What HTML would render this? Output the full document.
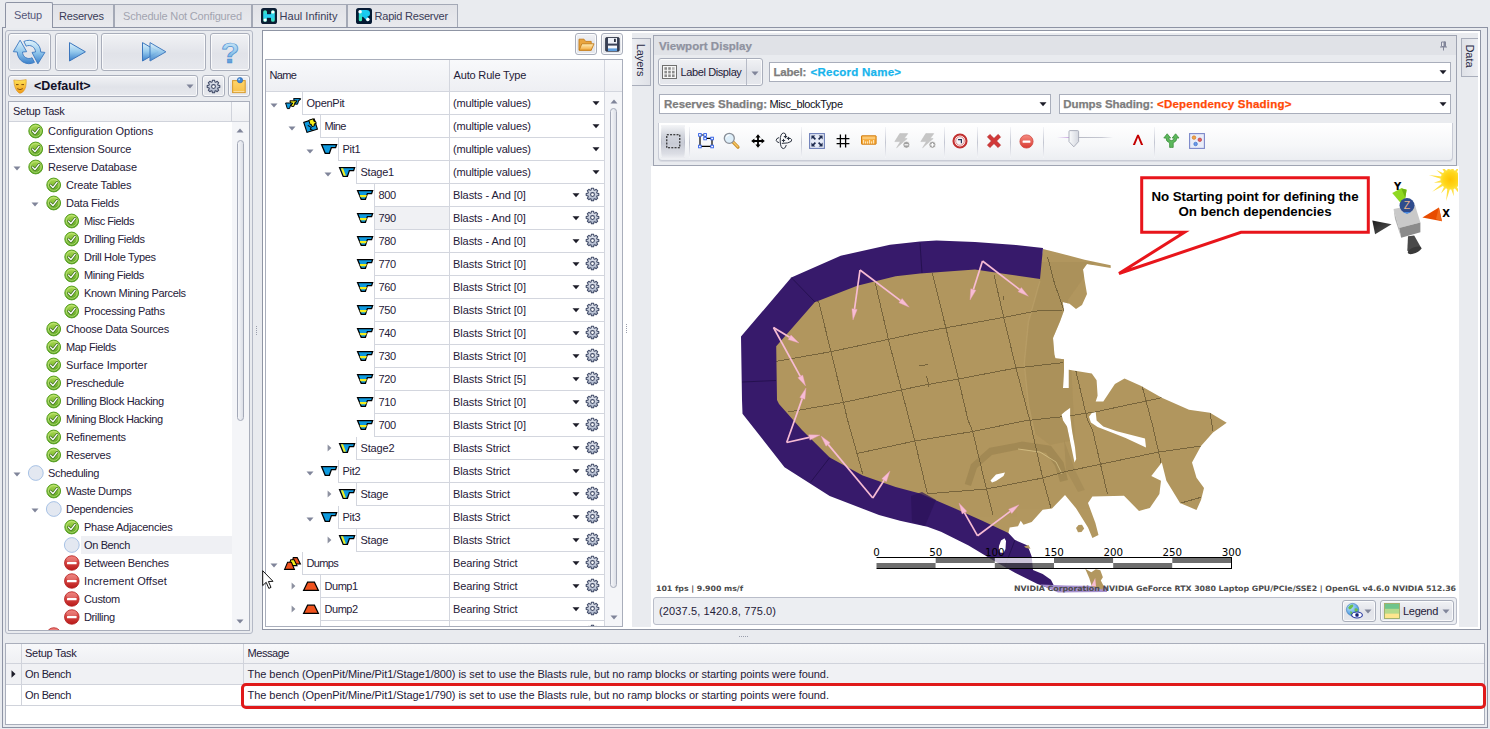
<!DOCTYPE html>
<html lang="en"><head><meta charset="utf-8"><title>Setup</title><style>
*{box-sizing:border-box}
html,body{margin:0;padding:0}
body{width:1490px;height:729px;overflow:hidden;background:#e9ebef;font-family:"Liberation Sans",sans-serif;font-size:11px;color:#1f2038;position:relative;letter-spacing:-0.05px}
.a{position:absolute}
.t{position:absolute;white-space:nowrap;line-height:14px;height:14px}
.btn{position:absolute;border:1px solid #a9aebb;border-radius:3px;background:linear-gradient(#f1f2f5,#e1e3e9 55%,#e6e8ed);box-shadow:inset 0 0 0 1px rgba(255,255,255,.75)}
.tab{position:absolute;border:1px solid #a4a9b6;border-bottom:none;background:linear-gradient(#e1e2e7,#e9eaee);top:4px;height:23px}
.inp{position:absolute;background:#fff;border:1px solid #a9aebb}
.hl{position:absolute;height:1px;background:#d5d8df}
.vl{position:absolute;width:1px;background:#d5d8df}
svg{position:absolute;overflow:visible}
</style></head>
<body>
<div class="a" style="left:2px;top:27px;width:1486px;height:701px;border:1px solid #8d93a4;background:#e9ebef"></div><div class="tab" style="left:52px;top:4px;width:62px;height:23px;"></div><div class="t" style="left:59px;top:9px;letter-spacing:-0.213px;color:#3a3c58">Reserves</div><div class="tab" style="left:114px;top:4px;width:138px;height:23px;"></div><div class="t" style="left:123px;top:9px;letter-spacing:-0.174px;color:#a2a4b0">Schedule Not Configured</div><div class="tab" style="left:252px;top:4px;width:95px;height:23px;"></div><div class="t" style="left:279.5px;top:9px;letter-spacing:0.038px;color:#3a3c58">Haul Infinity</div><div class="tab" style="left:347px;top:4px;width:111px;height:23px;"></div><div class="t" style="left:374.5px;top:9px;letter-spacing:-0.214px;color:#3a3c58">Rapid Reserver</div><div class="a" style="left:5px;top:2px;width:48px;height:26px;border:1px solid #8d93a4;border-bottom:none;background:#ebecf0;border-radius:2px 2px 0 0"></div><div class="t" style="left:14px;top:8px;letter-spacing:-0.150px;color:#55577a">Setup</div><svg style="left:261px;top:8px" width="16" height="16" viewBox="0 0 16 16"><defs><linearGradient id="ghi" x1="0" y1="0" x2="0" y2="1"><stop offset="0" stop-color="#3fe6b8"/><stop offset="0.5" stop-color="#2ad0f2"/><stop offset="1" stop-color="#3fe6b8"/></linearGradient></defs>
<rect x="0" y="0" width="16" height="16" rx="2.6" fill="#0b1d33"/>
<rect x="2.2" y="2.2" width="3.8" height="11.6" rx="1.9" fill="url(#ghi)"/><rect x="10" y="2.2" width="3.8" height="11.6" rx="1.9" fill="url(#ghi)"/><rect x="4.5" y="6.2" width="7" height="3.6" fill="#2ad0f2"/>
<circle cx="11.9" cy="4" r="1.6" fill="#fff"/><circle cx="4.1" cy="12" r="1.6" fill="#fff"/></svg><svg style="left:356px;top:8px" width="16" height="16" viewBox="0 0 16 16"><defs><linearGradient id="grr" x1="0" y1="0" x2="0" y2="1"><stop offset="0" stop-color="#1cc8f4"/><stop offset="1" stop-color="#3ff0b0"/></linearGradient></defs>
<rect x="0" y="0" width="16" height="16" rx="2.6" fill="#061a33"/>
<path d="M5 2.1 L10.4 2.1 Q14 2.1 14 5.4 Q14 8.7 10.4 8.7 L5 8.7 Z" fill="#1ccdf0"/>
<path d="M7.2 6.6 L11.8 11.4" stroke="#16c6f0" stroke-width="3.3" stroke-linecap="round"/>
<rect x="2.8" y="2.1" width="3.3" height="11.2" rx="1.65" fill="url(#grr)"/>
<circle cx="4.1" cy="3.8" r="1.75" fill="#fff"/><circle cx="11.8" cy="11.4" r="1.75" fill="#fff"/></svg><div class="a" style="left:5px;top:30px;width:248px;height:604px;border:1px solid #b4b9c6;border-radius:3px;background:#e9ebef"></div><div class="btn" style="left:8px;top:33px;width:43px;height:38px;"></div><div class="btn" style="left:55px;top:33px;width:43px;height:38px;"></div><div class="btn" style="left:101px;top:33px;width:105px;height:38px;"></div><div class="btn" style="left:210px;top:33px;width:40px;height:38px;"></div><svg style="left:13px;top:36px" width="34" height="32" viewBox="0 0 34 32"><defs><linearGradient id="gbl" x1="0" y1="0" x2="0" y2="1"><stop offset="0" stop-color="#e2f4fc"/><stop offset="0.5" stop-color="#93c8ec"/><stop offset="1" stop-color="#3a80cb"/></linearGradient></defs>
<g fill="url(#gbl)" stroke="#3b78bf" stroke-width="0.9" stroke-linejoin="round">
<path d="M10.87 5.48 A11.7 11.7 0 0 1 27.70 16 L31.9 16.4 L24.9 27.8 L19 16.4 L22.50 16 A6.5 6.5 0 0 0 13.15 10.16 Z"/>
<path d="M7.1 4.2 L13.7 15.7 L9.50 16 A6.5 6.5 0 0 0 19.05 21.74 L21.49 26.33 A11.7 11.7 0 0 1 4.30 16 L0.3 15.7 Z"/></g></svg><svg style="left:68px;top:40px" width="20" height="24" viewBox="0 0 20 24"><path d="M1.5 2.6 L17.4 11.8 L1.5 21 Z" fill="url(#gbl)" stroke="#3b76bd" stroke-width="1" stroke-linejoin="round"/></svg><svg style="left:141px;top:40px" width="28" height="24" viewBox="0 0 28 24"><path d="M1.5 2.6 L17.4 11.8 L1.5 21 Z" fill="url(#gbl)" stroke="#3b76bd" stroke-width="1" stroke-linejoin="round"/><path d="M9 2.6 L24.9 11.8 L9 21 Z" fill="url(#gbl)" stroke="#3b76bd" stroke-width="1" stroke-linejoin="round" opacity=".93"/></svg><svg style="left:218px;top:36px" width="26" height="32" viewBox="0 0 26 32"><text x="12.2" y="27" text-anchor="middle" font-family="Liberation Sans, sans-serif" font-weight="bold" font-size="30" fill="url(#gbl)" stroke="#4f8fd2" stroke-width="0.7">?</text></svg><div class="btn" style="left:8px;top:75px;width:190px;height:22px;"></div><svg style="left:13px;top:79px" width="14" height="15" viewBox="0 0 14 15"><defs><linearGradient id="gmk" x1="0" y1="0" x2="0" y2="1"><stop offset="0" stop-color="#ffe455"/><stop offset="1" stop-color="#f09a1a"/></linearGradient></defs>
<path d="M0.8 1 Q7 2.2 13.2 0.6 Q13.6 9 10.4 12.4 Q7.6 15 6 14 Q1.2 10.6 0.8 1 Z" fill="url(#gmk)" stroke="#d8901a" stroke-width="0.6"/>
<path d="M3 5.6 L5.6 5.6 M8.4 5.6 L11 5.6" stroke="#7a4a10" stroke-width="1"/><path d="M4.2 9.6 Q7 11.8 9.8 9.6" fill="none" stroke="#7a4a10" stroke-width="0.9"/></svg><div class="t" style="left:34px;top:79px;font-weight:bold;font-size:12.5px;color:#101028">&lt;Default&gt;</div><svg style="left:186px;top:84px" width="8" height="5" viewBox="0 0 8 5"><path d="M0.5 0.5 L7.5 0.5 L4 4.5 Z" fill="#80859a"/></svg><div class="btn" style="left:202px;top:75px;width:23px;height:22px;"></div><svg style="left:205.5px;top:78.5px" width="15" height="15" viewBox="0 0 15 15"><defs><linearGradient id="ggr" x1="0" y1="0" x2="0" y2="1"><stop offset="0" stop-color="#e6e9f1"/><stop offset="1" stop-color="#a9b3c8"/></linearGradient></defs>
<path d="M13.81 6.42 L13.81 8.58 L11.99 8.89 L11.66 9.69 L12.73 11.19 L11.19 12.73 L9.69 11.66 L8.89 11.99 L8.58 13.81 L6.42 13.81 L6.11 11.99 L5.31 11.66 L3.81 12.73 L2.27 11.19 L3.34 9.69 L3.01 8.89 L1.19 8.58 L1.19 6.42 L3.01 6.11 L3.34 5.31 L2.27 3.81 L3.81 2.27 L5.31 3.34 L6.11 3.01 L6.42 1.19 L8.58 1.19 L8.89 3.01 L9.69 3.34 L11.19 2.27 L12.73 3.81 L11.66 5.31 L11.99 6.11 Z" fill="url(#ggr)" stroke="#3f4966" stroke-width="1.05" stroke-linejoin="round"/><circle cx="7.5" cy="7.5" r="1.9" fill="#fff" stroke="#3f4966" stroke-width="1.05"/></svg><div class="btn" style="left:228px;top:75px;width:22px;height:22px;"></div><svg style="left:232px;top:77px" width="14" height="17" viewBox="0 0 14 17"><defs><linearGradient id="gnt" x1="0" y1="0" x2="0" y2="1"><stop offset="0" stop-color="#ffd56a"/><stop offset="1" stop-color="#f7c04a"/></linearGradient></defs>
<rect x="0.6" y="3.6" width="12.6" height="12" fill="url(#gnt)" stroke="#d79a2c" stroke-width="1"/><path d="M1.5 14.6 L12.4 14.6" stroke="#fbe3a8" stroke-width="1"/>
<circle cx="8" cy="3.2" r="2.7" fill="#3e86d6" stroke="#2a62a8" stroke-width="0.6"/><circle cx="7.2" cy="2.4" r="0.9" fill="#bfe0ff"/></svg><div class="a" style="left:8px;top:101px;width:242px;height:530px;border:1px solid #a9aebb;background:#fff;overflow:hidden"></div><div class="a" style="left:9px;top:102px;width:240px;height:19px;background:linear-gradient(#f7f8fa,#eff0f3)"></div><div class="a" style="left:9px;top:121px;width:240px;height:1px;background:#d0d3db"></div><div class="a" style="left:231px;top:102px;width:1px;height:19px;background:#d0d3db"></div><div class="t" style="left:13px;top:104px;letter-spacing:-0.267px;">Setup Task</div><div class="a" style="left:81px;top:536px;width:151px;height:18px;background:#eff0f4"></div><div class="a" style="left:0;top:0;width:250px;height:630px;overflow:hidden"><svg style="left:28px;top:123px" width="16" height="16" viewBox="0 0 16 16"><defs><linearGradient id="gck" x1="0" y1="0" x2="0" y2="1"><stop offset="0" stop-color="#b0dc52"/><stop offset="1" stop-color="#55a020"/></linearGradient></defs>
<circle cx="7.7" cy="8" r="6.9" fill="url(#gck)" stroke="#58a024" stroke-width="1"/>
<circle cx="7.7" cy="8" r="5.4" fill="none" stroke="#c9ea8e" stroke-width="0.9" opacity=".75"/>
<path d="M4.5 8.1 L6.9 10.6 L11.1 5.4" fill="none" stroke="#3f6f1e" stroke-width="2.7" stroke-linecap="round" stroke-linejoin="round"/>
<path d="M4.5 8.1 L6.9 10.6 L11.1 5.4" fill="none" stroke="#fff" stroke-width="1.35" stroke-linecap="round" stroke-linejoin="round"/></svg><div class="t" style="left:48px;top:124px;letter-spacing:-0.062px;">Configuration Options</div><svg style="left:28px;top:141px" width="16" height="16" viewBox="0 0 16 16"><defs><linearGradient id="gck" x1="0" y1="0" x2="0" y2="1"><stop offset="0" stop-color="#b0dc52"/><stop offset="1" stop-color="#55a020"/></linearGradient></defs>
<circle cx="7.7" cy="8" r="6.9" fill="url(#gck)" stroke="#58a024" stroke-width="1"/>
<circle cx="7.7" cy="8" r="5.4" fill="none" stroke="#c9ea8e" stroke-width="0.9" opacity=".75"/>
<path d="M4.5 8.1 L6.9 10.6 L11.1 5.4" fill="none" stroke="#3f6f1e" stroke-width="2.7" stroke-linecap="round" stroke-linejoin="round"/>
<path d="M4.5 8.1 L6.9 10.6 L11.1 5.4" fill="none" stroke="#fff" stroke-width="1.35" stroke-linecap="round" stroke-linejoin="round"/></svg><div class="t" style="left:48px;top:142px;letter-spacing:-0.184px;">Extension Source</div><svg style="left:13px;top:166px" width="8" height="5" viewBox="0 0 8 5"><path d="M0.5 0.5 L7.5 0.5 L4 4.5 Z" fill="#80859a"/></svg><svg style="left:28px;top:159px" width="16" height="16" viewBox="0 0 16 16"><defs><linearGradient id="gck" x1="0" y1="0" x2="0" y2="1"><stop offset="0" stop-color="#b0dc52"/><stop offset="1" stop-color="#55a020"/></linearGradient></defs>
<circle cx="7.7" cy="8" r="6.9" fill="url(#gck)" stroke="#58a024" stroke-width="1"/>
<circle cx="7.7" cy="8" r="5.4" fill="none" stroke="#c9ea8e" stroke-width="0.9" opacity=".75"/>
<path d="M4.5 8.1 L6.9 10.6 L11.1 5.4" fill="none" stroke="#3f6f1e" stroke-width="2.7" stroke-linecap="round" stroke-linejoin="round"/>
<path d="M4.5 8.1 L6.9 10.6 L11.1 5.4" fill="none" stroke="#fff" stroke-width="1.35" stroke-linecap="round" stroke-linejoin="round"/></svg><div class="t" style="left:48px;top:160px;letter-spacing:-0.137px;">Reserve Database</div><svg style="left:46px;top:177px" width="16" height="16" viewBox="0 0 16 16"><defs><linearGradient id="gck" x1="0" y1="0" x2="0" y2="1"><stop offset="0" stop-color="#b0dc52"/><stop offset="1" stop-color="#55a020"/></linearGradient></defs>
<circle cx="7.7" cy="8" r="6.9" fill="url(#gck)" stroke="#58a024" stroke-width="1"/>
<circle cx="7.7" cy="8" r="5.4" fill="none" stroke="#c9ea8e" stroke-width="0.9" opacity=".75"/>
<path d="M4.5 8.1 L6.9 10.6 L11.1 5.4" fill="none" stroke="#3f6f1e" stroke-width="2.7" stroke-linecap="round" stroke-linejoin="round"/>
<path d="M4.5 8.1 L6.9 10.6 L11.1 5.4" fill="none" stroke="#fff" stroke-width="1.35" stroke-linecap="round" stroke-linejoin="round"/></svg><div class="t" style="left:66px;top:178px;letter-spacing:-0.182px;">Create Tables</div><svg style="left:31px;top:202px" width="8" height="5" viewBox="0 0 8 5"><path d="M0.5 0.5 L7.5 0.5 L4 4.5 Z" fill="#80859a"/></svg><svg style="left:46px;top:195px" width="16" height="16" viewBox="0 0 16 16"><defs><linearGradient id="gck" x1="0" y1="0" x2="0" y2="1"><stop offset="0" stop-color="#b0dc52"/><stop offset="1" stop-color="#55a020"/></linearGradient></defs>
<circle cx="7.7" cy="8" r="6.9" fill="url(#gck)" stroke="#58a024" stroke-width="1"/>
<circle cx="7.7" cy="8" r="5.4" fill="none" stroke="#c9ea8e" stroke-width="0.9" opacity=".75"/>
<path d="M4.5 8.1 L6.9 10.6 L11.1 5.4" fill="none" stroke="#3f6f1e" stroke-width="2.7" stroke-linecap="round" stroke-linejoin="round"/>
<path d="M4.5 8.1 L6.9 10.6 L11.1 5.4" fill="none" stroke="#fff" stroke-width="1.35" stroke-linecap="round" stroke-linejoin="round"/></svg><div class="t" style="left:66px;top:196px;letter-spacing:-0.244px;">Data Fields</div><svg style="left:64px;top:213px" width="16" height="16" viewBox="0 0 16 16"><defs><linearGradient id="gck" x1="0" y1="0" x2="0" y2="1"><stop offset="0" stop-color="#b0dc52"/><stop offset="1" stop-color="#55a020"/></linearGradient></defs>
<circle cx="7.7" cy="8" r="6.9" fill="url(#gck)" stroke="#58a024" stroke-width="1"/>
<circle cx="7.7" cy="8" r="5.4" fill="none" stroke="#c9ea8e" stroke-width="0.9" opacity=".75"/>
<path d="M4.5 8.1 L6.9 10.6 L11.1 5.4" fill="none" stroke="#3f6f1e" stroke-width="2.7" stroke-linecap="round" stroke-linejoin="round"/>
<path d="M4.5 8.1 L6.9 10.6 L11.1 5.4" fill="none" stroke="#fff" stroke-width="1.35" stroke-linecap="round" stroke-linejoin="round"/></svg><div class="t" style="left:84px;top:214px;letter-spacing:-0.460px;">Misc Fields</div><svg style="left:64px;top:231px" width="16" height="16" viewBox="0 0 16 16"><defs><linearGradient id="gck" x1="0" y1="0" x2="0" y2="1"><stop offset="0" stop-color="#b0dc52"/><stop offset="1" stop-color="#55a020"/></linearGradient></defs>
<circle cx="7.7" cy="8" r="6.9" fill="url(#gck)" stroke="#58a024" stroke-width="1"/>
<circle cx="7.7" cy="8" r="5.4" fill="none" stroke="#c9ea8e" stroke-width="0.9" opacity=".75"/>
<path d="M4.5 8.1 L6.9 10.6 L11.1 5.4" fill="none" stroke="#3f6f1e" stroke-width="2.7" stroke-linecap="round" stroke-linejoin="round"/>
<path d="M4.5 8.1 L6.9 10.6 L11.1 5.4" fill="none" stroke="#fff" stroke-width="1.35" stroke-linecap="round" stroke-linejoin="round"/></svg><div class="t" style="left:84px;top:232px;letter-spacing:-0.357px;">Drilling Fields</div><svg style="left:64px;top:249px" width="16" height="16" viewBox="0 0 16 16"><defs><linearGradient id="gck" x1="0" y1="0" x2="0" y2="1"><stop offset="0" stop-color="#b0dc52"/><stop offset="1" stop-color="#55a020"/></linearGradient></defs>
<circle cx="7.7" cy="8" r="6.9" fill="url(#gck)" stroke="#58a024" stroke-width="1"/>
<circle cx="7.7" cy="8" r="5.4" fill="none" stroke="#c9ea8e" stroke-width="0.9" opacity=".75"/>
<path d="M4.5 8.1 L6.9 10.6 L11.1 5.4" fill="none" stroke="#3f6f1e" stroke-width="2.7" stroke-linecap="round" stroke-linejoin="round"/>
<path d="M4.5 8.1 L6.9 10.6 L11.1 5.4" fill="none" stroke="#fff" stroke-width="1.35" stroke-linecap="round" stroke-linejoin="round"/></svg><div class="t" style="left:84px;top:250px;letter-spacing:-0.317px;">Drill Hole Types</div><svg style="left:64px;top:267px" width="16" height="16" viewBox="0 0 16 16"><defs><linearGradient id="gck" x1="0" y1="0" x2="0" y2="1"><stop offset="0" stop-color="#b0dc52"/><stop offset="1" stop-color="#55a020"/></linearGradient></defs>
<circle cx="7.7" cy="8" r="6.9" fill="url(#gck)" stroke="#58a024" stroke-width="1"/>
<circle cx="7.7" cy="8" r="5.4" fill="none" stroke="#c9ea8e" stroke-width="0.9" opacity=".75"/>
<path d="M4.5 8.1 L6.9 10.6 L11.1 5.4" fill="none" stroke="#3f6f1e" stroke-width="2.7" stroke-linecap="round" stroke-linejoin="round"/>
<path d="M4.5 8.1 L6.9 10.6 L11.1 5.4" fill="none" stroke="#fff" stroke-width="1.35" stroke-linecap="round" stroke-linejoin="round"/></svg><div class="t" style="left:84px;top:268px;letter-spacing:-0.375px;">Mining Fields</div><svg style="left:64px;top:285px" width="16" height="16" viewBox="0 0 16 16"><defs><linearGradient id="gck" x1="0" y1="0" x2="0" y2="1"><stop offset="0" stop-color="#b0dc52"/><stop offset="1" stop-color="#55a020"/></linearGradient></defs>
<circle cx="7.7" cy="8" r="6.9" fill="url(#gck)" stroke="#58a024" stroke-width="1"/>
<circle cx="7.7" cy="8" r="5.4" fill="none" stroke="#c9ea8e" stroke-width="0.9" opacity=".75"/>
<path d="M4.5 8.1 L6.9 10.6 L11.1 5.4" fill="none" stroke="#3f6f1e" stroke-width="2.7" stroke-linecap="round" stroke-linejoin="round"/>
<path d="M4.5 8.1 L6.9 10.6 L11.1 5.4" fill="none" stroke="#fff" stroke-width="1.35" stroke-linecap="round" stroke-linejoin="round"/></svg><div class="t" style="left:84px;top:286px;letter-spacing:-0.354px;">Known Mining Parcels</div><svg style="left:64px;top:303px" width="16" height="16" viewBox="0 0 16 16"><defs><linearGradient id="gck" x1="0" y1="0" x2="0" y2="1"><stop offset="0" stop-color="#b0dc52"/><stop offset="1" stop-color="#55a020"/></linearGradient></defs>
<circle cx="7.7" cy="8" r="6.9" fill="url(#gck)" stroke="#58a024" stroke-width="1"/>
<circle cx="7.7" cy="8" r="5.4" fill="none" stroke="#c9ea8e" stroke-width="0.9" opacity=".75"/>
<path d="M4.5 8.1 L6.9 10.6 L11.1 5.4" fill="none" stroke="#3f6f1e" stroke-width="2.7" stroke-linecap="round" stroke-linejoin="round"/>
<path d="M4.5 8.1 L6.9 10.6 L11.1 5.4" fill="none" stroke="#fff" stroke-width="1.35" stroke-linecap="round" stroke-linejoin="round"/></svg><div class="t" style="left:84px;top:304px;letter-spacing:-0.314px;">Processing Paths</div><svg style="left:46px;top:321px" width="16" height="16" viewBox="0 0 16 16"><defs><linearGradient id="gck" x1="0" y1="0" x2="0" y2="1"><stop offset="0" stop-color="#b0dc52"/><stop offset="1" stop-color="#55a020"/></linearGradient></defs>
<circle cx="7.7" cy="8" r="6.9" fill="url(#gck)" stroke="#58a024" stroke-width="1"/>
<circle cx="7.7" cy="8" r="5.4" fill="none" stroke="#c9ea8e" stroke-width="0.9" opacity=".75"/>
<path d="M4.5 8.1 L6.9 10.6 L11.1 5.4" fill="none" stroke="#3f6f1e" stroke-width="2.7" stroke-linecap="round" stroke-linejoin="round"/>
<path d="M4.5 8.1 L6.9 10.6 L11.1 5.4" fill="none" stroke="#fff" stroke-width="1.35" stroke-linecap="round" stroke-linejoin="round"/></svg><div class="t" style="left:66px;top:322px;letter-spacing:-0.247px;">Choose Data Sources</div><svg style="left:46px;top:339px" width="16" height="16" viewBox="0 0 16 16"><defs><linearGradient id="gck" x1="0" y1="0" x2="0" y2="1"><stop offset="0" stop-color="#b0dc52"/><stop offset="1" stop-color="#55a020"/></linearGradient></defs>
<circle cx="7.7" cy="8" r="6.9" fill="url(#gck)" stroke="#58a024" stroke-width="1"/>
<circle cx="7.7" cy="8" r="5.4" fill="none" stroke="#c9ea8e" stroke-width="0.9" opacity=".75"/>
<path d="M4.5 8.1 L6.9 10.6 L11.1 5.4" fill="none" stroke="#3f6f1e" stroke-width="2.7" stroke-linecap="round" stroke-linejoin="round"/>
<path d="M4.5 8.1 L6.9 10.6 L11.1 5.4" fill="none" stroke="#fff" stroke-width="1.35" stroke-linecap="round" stroke-linejoin="round"/></svg><div class="t" style="left:66px;top:340px;letter-spacing:-0.388px;">Map Fields</div><svg style="left:46px;top:357px" width="16" height="16" viewBox="0 0 16 16"><defs><linearGradient id="gck" x1="0" y1="0" x2="0" y2="1"><stop offset="0" stop-color="#b0dc52"/><stop offset="1" stop-color="#55a020"/></linearGradient></defs>
<circle cx="7.7" cy="8" r="6.9" fill="url(#gck)" stroke="#58a024" stroke-width="1"/>
<circle cx="7.7" cy="8" r="5.4" fill="none" stroke="#c9ea8e" stroke-width="0.9" opacity=".75"/>
<path d="M4.5 8.1 L6.9 10.6 L11.1 5.4" fill="none" stroke="#3f6f1e" stroke-width="2.7" stroke-linecap="round" stroke-linejoin="round"/>
<path d="M4.5 8.1 L6.9 10.6 L11.1 5.4" fill="none" stroke="#fff" stroke-width="1.35" stroke-linecap="round" stroke-linejoin="round"/></svg><div class="t" style="left:66px;top:358px;letter-spacing:-0.041px;">Surface Importer</div><svg style="left:46px;top:375px" width="16" height="16" viewBox="0 0 16 16"><defs><linearGradient id="gck" x1="0" y1="0" x2="0" y2="1"><stop offset="0" stop-color="#b0dc52"/><stop offset="1" stop-color="#55a020"/></linearGradient></defs>
<circle cx="7.7" cy="8" r="6.9" fill="url(#gck)" stroke="#58a024" stroke-width="1"/>
<circle cx="7.7" cy="8" r="5.4" fill="none" stroke="#c9ea8e" stroke-width="0.9" opacity=".75"/>
<path d="M4.5 8.1 L6.9 10.6 L11.1 5.4" fill="none" stroke="#3f6f1e" stroke-width="2.7" stroke-linecap="round" stroke-linejoin="round"/>
<path d="M4.5 8.1 L6.9 10.6 L11.1 5.4" fill="none" stroke="#fff" stroke-width="1.35" stroke-linecap="round" stroke-linejoin="round"/></svg><div class="t" style="left:66px;top:376px;letter-spacing:-0.308px;">Preschedule</div><svg style="left:46px;top:393px" width="16" height="16" viewBox="0 0 16 16"><defs><linearGradient id="gck" x1="0" y1="0" x2="0" y2="1"><stop offset="0" stop-color="#b0dc52"/><stop offset="1" stop-color="#55a020"/></linearGradient></defs>
<circle cx="7.7" cy="8" r="6.9" fill="url(#gck)" stroke="#58a024" stroke-width="1"/>
<circle cx="7.7" cy="8" r="5.4" fill="none" stroke="#c9ea8e" stroke-width="0.9" opacity=".75"/>
<path d="M4.5 8.1 L6.9 10.6 L11.1 5.4" fill="none" stroke="#3f6f1e" stroke-width="2.7" stroke-linecap="round" stroke-linejoin="round"/>
<path d="M4.5 8.1 L6.9 10.6 L11.1 5.4" fill="none" stroke="#fff" stroke-width="1.35" stroke-linecap="round" stroke-linejoin="round"/></svg><div class="t" style="left:66px;top:394px;letter-spacing:-0.390px;">Drilling Block Hacking</div><svg style="left:46px;top:411px" width="16" height="16" viewBox="0 0 16 16"><defs><linearGradient id="gck" x1="0" y1="0" x2="0" y2="1"><stop offset="0" stop-color="#b0dc52"/><stop offset="1" stop-color="#55a020"/></linearGradient></defs>
<circle cx="7.7" cy="8" r="6.9" fill="url(#gck)" stroke="#58a024" stroke-width="1"/>
<circle cx="7.7" cy="8" r="5.4" fill="none" stroke="#c9ea8e" stroke-width="0.9" opacity=".75"/>
<path d="M4.5 8.1 L6.9 10.6 L11.1 5.4" fill="none" stroke="#3f6f1e" stroke-width="2.7" stroke-linecap="round" stroke-linejoin="round"/>
<path d="M4.5 8.1 L6.9 10.6 L11.1 5.4" fill="none" stroke="#fff" stroke-width="1.35" stroke-linecap="round" stroke-linejoin="round"/></svg><div class="t" style="left:66px;top:412px;letter-spacing:-0.424px;">Mining Block Hacking</div><svg style="left:46px;top:429px" width="16" height="16" viewBox="0 0 16 16"><defs><linearGradient id="gck" x1="0" y1="0" x2="0" y2="1"><stop offset="0" stop-color="#b0dc52"/><stop offset="1" stop-color="#55a020"/></linearGradient></defs>
<circle cx="7.7" cy="8" r="6.9" fill="url(#gck)" stroke="#58a024" stroke-width="1"/>
<circle cx="7.7" cy="8" r="5.4" fill="none" stroke="#c9ea8e" stroke-width="0.9" opacity=".75"/>
<path d="M4.5 8.1 L6.9 10.6 L11.1 5.4" fill="none" stroke="#3f6f1e" stroke-width="2.7" stroke-linecap="round" stroke-linejoin="round"/>
<path d="M4.5 8.1 L6.9 10.6 L11.1 5.4" fill="none" stroke="#fff" stroke-width="1.35" stroke-linecap="round" stroke-linejoin="round"/></svg><div class="t" style="left:66px;top:430px;letter-spacing:-0.165px;">Refinements</div><svg style="left:46px;top:447px" width="16" height="16" viewBox="0 0 16 16"><defs><linearGradient id="gck" x1="0" y1="0" x2="0" y2="1"><stop offset="0" stop-color="#b0dc52"/><stop offset="1" stop-color="#55a020"/></linearGradient></defs>
<circle cx="7.7" cy="8" r="6.9" fill="url(#gck)" stroke="#58a024" stroke-width="1"/>
<circle cx="7.7" cy="8" r="5.4" fill="none" stroke="#c9ea8e" stroke-width="0.9" opacity=".75"/>
<path d="M4.5 8.1 L6.9 10.6 L11.1 5.4" fill="none" stroke="#3f6f1e" stroke-width="2.7" stroke-linecap="round" stroke-linejoin="round"/>
<path d="M4.5 8.1 L6.9 10.6 L11.1 5.4" fill="none" stroke="#fff" stroke-width="1.35" stroke-linecap="round" stroke-linejoin="round"/></svg><div class="t" style="left:66px;top:448px;letter-spacing:-0.213px;">Reserves</div><svg style="left:13px;top:472px" width="8" height="5" viewBox="0 0 8 5"><path d="M0.5 0.5 L7.5 0.5 L4 4.5 Z" fill="#80859a"/></svg><svg style="left:28px;top:465px" width="16" height="16" viewBox="0 0 16 16"><circle cx="7.8" cy="8" r="7.4" fill="#e3e8f1" stroke="#a9c3e6" stroke-width="1"/></svg><div class="t" style="left:48px;top:466px;letter-spacing:-0.344px;">Scheduling</div><svg style="left:46px;top:483px" width="16" height="16" viewBox="0 0 16 16"><defs><linearGradient id="gck" x1="0" y1="0" x2="0" y2="1"><stop offset="0" stop-color="#b0dc52"/><stop offset="1" stop-color="#55a020"/></linearGradient></defs>
<circle cx="7.7" cy="8" r="6.9" fill="url(#gck)" stroke="#58a024" stroke-width="1"/>
<circle cx="7.7" cy="8" r="5.4" fill="none" stroke="#c9ea8e" stroke-width="0.9" opacity=".75"/>
<path d="M4.5 8.1 L6.9 10.6 L11.1 5.4" fill="none" stroke="#3f6f1e" stroke-width="2.7" stroke-linecap="round" stroke-linejoin="round"/>
<path d="M4.5 8.1 L6.9 10.6 L11.1 5.4" fill="none" stroke="#fff" stroke-width="1.35" stroke-linecap="round" stroke-linejoin="round"/></svg><div class="t" style="left:66px;top:484px;letter-spacing:-0.283px;">Waste Dumps</div><svg style="left:31px;top:508px" width="8" height="5" viewBox="0 0 8 5"><path d="M0.5 0.5 L7.5 0.5 L4 4.5 Z" fill="#80859a"/></svg><svg style="left:46px;top:501px" width="16" height="16" viewBox="0 0 16 16"><circle cx="7.8" cy="8" r="7.4" fill="#e3e8f1" stroke="#a9c3e6" stroke-width="1"/></svg><div class="t" style="left:66px;top:502px;letter-spacing:-0.281px;">Dependencies</div><svg style="left:64px;top:519px" width="16" height="16" viewBox="0 0 16 16"><defs><linearGradient id="gck" x1="0" y1="0" x2="0" y2="1"><stop offset="0" stop-color="#b0dc52"/><stop offset="1" stop-color="#55a020"/></linearGradient></defs>
<circle cx="7.7" cy="8" r="6.9" fill="url(#gck)" stroke="#58a024" stroke-width="1"/>
<circle cx="7.7" cy="8" r="5.4" fill="none" stroke="#c9ea8e" stroke-width="0.9" opacity=".75"/>
<path d="M4.5 8.1 L6.9 10.6 L11.1 5.4" fill="none" stroke="#3f6f1e" stroke-width="2.7" stroke-linecap="round" stroke-linejoin="round"/>
<path d="M4.5 8.1 L6.9 10.6 L11.1 5.4" fill="none" stroke="#fff" stroke-width="1.35" stroke-linecap="round" stroke-linejoin="round"/></svg><div class="t" style="left:84px;top:520px;letter-spacing:-0.268px;">Phase Adjacencies</div><svg style="left:64px;top:537px" width="16" height="16" viewBox="0 0 16 16"><circle cx="7.8" cy="8" r="7.4" fill="#e3e8f1" stroke="#a9c3e6" stroke-width="1"/></svg><div class="t" style="left:84px;top:538px;letter-spacing:-0.367px;">On Bench</div><svg style="left:64px;top:555px" width="16" height="16" viewBox="0 0 16 16"><defs><linearGradient id="grd" x1="0" y1="0" x2="0" y2="1"><stop offset="0" stop-color="#ee6a64"/><stop offset="1" stop-color="#b81818"/></linearGradient></defs>
<circle cx="7.8" cy="8" r="7.3" fill="url(#grd)" stroke="#b42525" stroke-width="0.8"/>
<ellipse cx="7.8" cy="4.6" rx="5.4" ry="3.2" fill="#fff" opacity=".18"/>
<rect x="3" y="6.9" width="9.6" height="2.3" rx="0.5" fill="#fff"/></svg><div class="t" style="left:84px;top:556px;letter-spacing:-0.259px;">Between Benches</div><svg style="left:64px;top:573px" width="16" height="16" viewBox="0 0 16 16"><defs><linearGradient id="grd" x1="0" y1="0" x2="0" y2="1"><stop offset="0" stop-color="#ee6a64"/><stop offset="1" stop-color="#b81818"/></linearGradient></defs>
<circle cx="7.8" cy="8" r="7.3" fill="url(#grd)" stroke="#b42525" stroke-width="0.8"/>
<ellipse cx="7.8" cy="4.6" rx="5.4" ry="3.2" fill="#fff" opacity=".18"/>
<rect x="3" y="6.9" width="9.6" height="2.3" rx="0.5" fill="#fff"/></svg><div class="t" style="left:84px;top:574px;letter-spacing:0.117px;">Increment Offset</div><svg style="left:64px;top:591px" width="16" height="16" viewBox="0 0 16 16"><defs><linearGradient id="grd" x1="0" y1="0" x2="0" y2="1"><stop offset="0" stop-color="#ee6a64"/><stop offset="1" stop-color="#b81818"/></linearGradient></defs>
<circle cx="7.8" cy="8" r="7.3" fill="url(#grd)" stroke="#b42525" stroke-width="0.8"/>
<ellipse cx="7.8" cy="4.6" rx="5.4" ry="3.2" fill="#fff" opacity=".18"/>
<rect x="3" y="6.9" width="9.6" height="2.3" rx="0.5" fill="#fff"/></svg><div class="t" style="left:84px;top:592px;letter-spacing:-0.323px;">Custom</div><svg style="left:64px;top:609px" width="16" height="16" viewBox="0 0 16 16"><defs><linearGradient id="grd" x1="0" y1="0" x2="0" y2="1"><stop offset="0" stop-color="#ee6a64"/><stop offset="1" stop-color="#b81818"/></linearGradient></defs>
<circle cx="7.8" cy="8" r="7.3" fill="url(#grd)" stroke="#b42525" stroke-width="0.8"/>
<ellipse cx="7.8" cy="4.6" rx="5.4" ry="3.2" fill="#fff" opacity=".18"/>
<rect x="3" y="6.9" width="9.6" height="2.3" rx="0.5" fill="#fff"/></svg><div class="t" style="left:84px;top:610px;letter-spacing:-0.366px;">Drilling</div><svg style="left:46px;top:627px" width="16" height="16" viewBox="0 0 16 16"><defs><linearGradient id="grd" x1="0" y1="0" x2="0" y2="1"><stop offset="0" stop-color="#ee6a64"/><stop offset="1" stop-color="#b81818"/></linearGradient></defs>
<circle cx="7.8" cy="8" r="7.3" fill="url(#grd)" stroke="#b42525" stroke-width="0.8"/>
<ellipse cx="7.8" cy="4.6" rx="5.4" ry="3.2" fill="#fff" opacity=".18"/>
<rect x="3" y="6.9" width="9.6" height="2.3" rx="0.5" fill="#fff"/></svg></div><div class="a" style="left:232px;top:122px;width:17px;height:508px;background:#f4f5f8"></div><svg style="left:236px;top:128px" width="8" height="5" viewBox="0 0 8 5"><path d="M0.5 4.5 L7.5 4.5 L4 0.5 Z" fill="#80859a"/></svg><div class="a" style="left:237px;top:140px;width:7px;height:281px;border:1px solid #a4a9b8;border-radius:3.5px;background:linear-gradient(90deg,#f5f6f9,#dcdfe7)"></div><svg style="left:236px;top:619px" width="8" height="5" viewBox="0 0 8 5"><path d="M0.5 0.5 L7.5 0.5 L4 4.5 Z" fill="#80859a"/></svg><div class="a" style="left:262px;top:30px;width:1219px;height:600px;border:1px solid #8f95a4;background:#fff"></div><div class="btn" style="left:575px;top:33px;width:22px;height:22px;"></div><div class="btn" style="left:601px;top:33px;width:22px;height:22px;"></div><svg style="left:577.5px;top:36.5px" width="17" height="15" viewBox="0 0 17 15"><defs><linearGradient id="gfo" x1="0" y1="0" x2="0" y2="1"><stop offset="0" stop-color="#fff0bd"/><stop offset="1" stop-color="#f3a83a"/></linearGradient></defs>
<path d="M1 2.2 L1 13.2 L13.2 13.2 L13.2 4.4 L7.6 4.4 L6 2.2 Z" fill="#eaa53e" stroke="#c47d1c" stroke-width="0.9" stroke-linejoin="round"/>
<path d="M1.2 13.2 L3.8 6.8 L16 6.8 L13.2 13.2 Z" fill="url(#gfo)" stroke="#c47d1c" stroke-width="0.9" stroke-linejoin="round"/></svg><svg style="left:605px;top:36.5px" width="15" height="15" viewBox="0 0 15 15"><rect x="0.6" y="0.6" width="13.6" height="13.6" rx="1" fill="#3a4258" stroke="#262c3c" stroke-width="0.8"/>
<rect x="3" y="1" width="9" height="5.6" fill="#eef1f8"/><rect x="9" y="1.8" width="1.8" height="3.2" fill="#262c3c"/>
<rect x="3" y="8.6" width="9" height="5.4" fill="#f4f6fb"/><rect x="3" y="11.4" width="9" height="2.6" fill="#5d9ee0"/></svg><div class="a" style="left:265px;top:59px;width:358px;height:568px;border:1px solid #a9aebb;background:#fff;overflow:hidden"></div><div class="a" style="left:266px;top:60px;width:356px;height:31px;background:linear-gradient(#f8f9fb,#eeeff3)"></div><div class="a" style="left:266px;top:91px;width:356px;height:1px;background:#d3d6de"></div><div class="a" style="left:449px;top:60px;width:1px;height:566px;background:#d3d6de"></div><div class="a" style="left:604px;top:60px;width:1px;height:566px;background:#d3d6de"></div><div class="t" style="left:269.5px;top:68px;letter-spacing:-0.644px;">Name</div><div class="t" style="left:453.5px;top:68px;letter-spacing:-0.162px;">Auto Rule Type</div><div class="a" style="left:0;top:0;width:605px;height:626px;overflow:hidden"><div class="a" style="left:302px;top:114px;width:303px;height:1px;background:#d3d6de"></div><div class="a" style="left:302px;top:92px;width:1px;height:23px;background:#d3d6de"></div><svg style="left:270px;top:102.6px" width="8" height="5" viewBox="0 0 8 5"><path d="M0.5 0.5 L7.5 0.5 L4 4.5 Z" fill="#80859a"/></svg><svg style="left:285px;top:98px" width="16" height="11" viewBox="0 0 16 11"><g stroke="#000" stroke-width="1.0" stroke-linejoin="miter"><path transform="translate(8.1,-0.1)" d="M0.5 0.7 L7.5 0.7 L6.9 2.2 L5.7 2.2 L4.4 6.3 L2.2 6.3 Z" fill="#0e9ade"/><path transform="translate(4.4,2.1)" d="M0.5 0.7 L7.5 0.7 L6.9 2.2 L5.7 2.2 L4.4 6.3 L2.2 6.3 Z" fill="#f4ee1c"/><path transform="translate(0.1,4.3)" d="M0.5 0.7 L7.5 0.7 L6.9 2.2 L5.7 2.2 L4.4 6.3 L2.2 6.3 Z" fill="#0e9ade"/></g></svg><div class="t" style="left:306.5px;top:96px;letter-spacing:-0.264px;">OpenPit</div><div class="t" style="left:453px;top:96px;letter-spacing:-0.135px;">(multiple values)</div><svg style="left:591.5px;top:100.6px" width="8" height="5" viewBox="0 0 8 5"><path d="M0.5 0.3 L7.5 0.3 L4 4.3 Z" fill="#1c1c28"/></svg><div class="a" style="left:320px;top:137px;width:285px;height:1px;background:#d3d6de"></div><div class="a" style="left:320px;top:115px;width:1px;height:23px;background:#d3d6de"></div><svg style="left:288px;top:125.6px" width="8" height="5" viewBox="0 0 8 5"><path d="M0.5 0.5 L7.5 0.5 L4 4.5 Z" fill="#80859a"/></svg><svg style="left:303.2px;top:118px" width="15" height="15" viewBox="0 0 15 15"><g transform="rotate(-18 7.5 7.5)"><rect x="2" y="2.5" width="11" height="10.5" fill="#0e9ade" stroke="#000" stroke-width="1.1"/>
<path d="M7.5 2 L12.2 2 L12.2 5 L13.6 5 L13.6 7.2 L11.4 7.2 L11.4 9 L8.6 9 L8.6 6.6 L7.5 6.6 Z" fill="#f4ee1c" stroke="#000" stroke-width="0.9"/>
<path d="M5 6.5 L7.5 9.5 L6.2 11 L8.5 13" fill="none" stroke="#000" stroke-width="1"/></g></svg><div class="t" style="left:324.5px;top:119px;letter-spacing:-0.619px;">Mine</div><div class="t" style="left:453px;top:119px;letter-spacing:-0.135px;">(multiple values)</div><svg style="left:591.5px;top:123.6px" width="8" height="5" viewBox="0 0 8 5"><path d="M0.5 0.3 L7.5 0.3 L4 4.3 Z" fill="#1c1c28"/></svg><div class="a" style="left:338px;top:160px;width:267px;height:1px;background:#d3d6de"></div><div class="a" style="left:338px;top:138px;width:1px;height:23px;background:#d3d6de"></div><svg style="left:306px;top:148.6px" width="8" height="5" viewBox="0 0 8 5"><path d="M0.5 0.5 L7.5 0.5 L4 4.5 Z" fill="#80859a"/></svg><svg style="left:321px;top:144px" width="16" height="10" viewBox="0 0 16 10"><path d="M0.6 0.7 L15.6 0.7 L14.6 3.6 L10.4 3.6 L8.4 9.3 L4.2 9.3 Z" fill="#0e9ade" stroke="#000" stroke-width="1.3" stroke-linejoin="miter"/></svg><div class="t" style="left:342.5px;top:142px;letter-spacing:-0.259px;">Pit1</div><div class="t" style="left:453px;top:142px;letter-spacing:-0.135px;">(multiple values)</div><svg style="left:591.5px;top:146.6px" width="8" height="5" viewBox="0 0 8 5"><path d="M0.5 0.3 L7.5 0.3 L4 4.3 Z" fill="#1c1c28"/></svg><div class="a" style="left:356px;top:183px;width:249px;height:1px;background:#d3d6de"></div><div class="a" style="left:356px;top:161px;width:1px;height:23px;background:#d3d6de"></div><svg style="left:324px;top:171.6px" width="8" height="5" viewBox="0 0 8 5"><path d="M0.5 0.5 L7.5 0.5 L4 4.5 Z" fill="#80859a"/></svg><svg style="left:339px;top:167px" width="16" height="10" viewBox="0 0 16 10"><path d="M0.6 0.7 L15.6 0.7 L14.6 3.6 L10.4 3.6 L8.4 9.3 L4.2 9.3 Z" fill="#0e9ade" stroke="#000" stroke-width="1.3"/><path d="M1.9 1.3 L4.1 1.3 L6.9 8.7 L4.7 8.7 Z" fill="#f4ee1c"/></svg><div class="t" style="left:360.5px;top:165px;letter-spacing:-0.229px;">Stage1</div><div class="t" style="left:453px;top:165px;letter-spacing:-0.135px;">(multiple values)</div><svg style="left:591.5px;top:169.6px" width="8" height="5" viewBox="0 0 8 5"><path d="M0.5 0.3 L7.5 0.3 L4 4.3 Z" fill="#1c1c28"/></svg><div class="a" style="left:374px;top:206px;width:231px;height:1px;background:#d3d6de"></div><div class="a" style="left:374px;top:184px;width:1px;height:23px;background:#d3d6de"></div><svg style="left:357px;top:190px" width="16" height="10" viewBox="0 0 16 10"><path d="M0.6 0.7 L15.6 0.7 L14.6 3.6 L10.4 3.6 L8.4 9.3 L4.2 9.3 Z" fill="#0e9ade" stroke="#000" stroke-width="1.3"/><path d="M2.6 5.0 L9.8 5.0 L9.1 7.2 L3.5 7.2 Z" fill="#f4ee1c"/></svg><div class="t" style="left:378.5px;top:188px;letter-spacing:-0.325px;">800</div><div class="t" style="left:453px;top:188px;letter-spacing:-0.082px;">Blasts - And [0]</div><svg style="left:571.5px;top:192.6px" width="8" height="5" viewBox="0 0 8 5"><path d="M0.5 0.3 L7.5 0.3 L4 4.3 Z" fill="#1c1c28"/></svg><svg style="left:585.2px;top:187.1px" width="15" height="15" viewBox="0 0 15 15"><defs><linearGradient id="ggr" x1="0" y1="0" x2="0" y2="1"><stop offset="0" stop-color="#e6e9f1"/><stop offset="1" stop-color="#a9b3c8"/></linearGradient></defs>
<path d="M13.81 6.42 L13.81 8.58 L11.99 8.89 L11.66 9.69 L12.73 11.19 L11.19 12.73 L9.69 11.66 L8.89 11.99 L8.58 13.81 L6.42 13.81 L6.11 11.99 L5.31 11.66 L3.81 12.73 L2.27 11.19 L3.34 9.69 L3.01 8.89 L1.19 8.58 L1.19 6.42 L3.01 6.11 L3.34 5.31 L2.27 3.81 L3.81 2.27 L5.31 3.34 L6.11 3.01 L6.42 1.19 L8.58 1.19 L8.89 3.01 L9.69 3.34 L11.19 2.27 L12.73 3.81 L11.66 5.31 L11.99 6.11 Z" fill="url(#ggr)" stroke="#3f4966" stroke-width="1.05" stroke-linejoin="round"/><circle cx="7.5" cy="7.5" r="1.9" fill="#fff" stroke="#3f4966" stroke-width="1.05"/></svg><div class="a" style="left:375px;top:207px;width:74px;height:22px;background:#f0f1f4"></div><div class="a" style="left:374px;top:229px;width:231px;height:1px;background:#d3d6de"></div><div class="a" style="left:374px;top:207px;width:1px;height:23px;background:#d3d6de"></div><svg style="left:357px;top:213px" width="16" height="10" viewBox="0 0 16 10"><path d="M0.6 0.7 L15.6 0.7 L14.6 3.6 L10.4 3.6 L8.4 9.3 L4.2 9.3 Z" fill="#0e9ade" stroke="#000" stroke-width="1.3"/><path d="M2.6 5.0 L9.8 5.0 L9.1 7.2 L3.5 7.2 Z" fill="#f4ee1c"/></svg><div class="t" style="left:378.5px;top:211px;letter-spacing:-0.325px;">790</div><div class="t" style="left:453px;top:211px;letter-spacing:-0.082px;">Blasts - And [0]</div><svg style="left:571.5px;top:215.6px" width="8" height="5" viewBox="0 0 8 5"><path d="M0.5 0.3 L7.5 0.3 L4 4.3 Z" fill="#1c1c28"/></svg><svg style="left:585.2px;top:210.1px" width="15" height="15" viewBox="0 0 15 15"><defs><linearGradient id="ggr" x1="0" y1="0" x2="0" y2="1"><stop offset="0" stop-color="#e6e9f1"/><stop offset="1" stop-color="#a9b3c8"/></linearGradient></defs>
<path d="M13.81 6.42 L13.81 8.58 L11.99 8.89 L11.66 9.69 L12.73 11.19 L11.19 12.73 L9.69 11.66 L8.89 11.99 L8.58 13.81 L6.42 13.81 L6.11 11.99 L5.31 11.66 L3.81 12.73 L2.27 11.19 L3.34 9.69 L3.01 8.89 L1.19 8.58 L1.19 6.42 L3.01 6.11 L3.34 5.31 L2.27 3.81 L3.81 2.27 L5.31 3.34 L6.11 3.01 L6.42 1.19 L8.58 1.19 L8.89 3.01 L9.69 3.34 L11.19 2.27 L12.73 3.81 L11.66 5.31 L11.99 6.11 Z" fill="url(#ggr)" stroke="#3f4966" stroke-width="1.05" stroke-linejoin="round"/><circle cx="7.5" cy="7.5" r="1.9" fill="#fff" stroke="#3f4966" stroke-width="1.05"/></svg><div class="a" style="left:374px;top:252px;width:231px;height:1px;background:#d3d6de"></div><div class="a" style="left:374px;top:230px;width:1px;height:23px;background:#d3d6de"></div><svg style="left:357px;top:236px" width="16" height="10" viewBox="0 0 16 10"><path d="M0.6 0.7 L15.6 0.7 L14.6 3.6 L10.4 3.6 L8.4 9.3 L4.2 9.3 Z" fill="#0e9ade" stroke="#000" stroke-width="1.3"/><path d="M2.6 5.0 L9.8 5.0 L9.1 7.2 L3.5 7.2 Z" fill="#f4ee1c"/></svg><div class="t" style="left:378.5px;top:234px;letter-spacing:-0.325px;">780</div><div class="t" style="left:453px;top:234px;letter-spacing:-0.082px;">Blasts - And [0]</div><svg style="left:571.5px;top:238.6px" width="8" height="5" viewBox="0 0 8 5"><path d="M0.5 0.3 L7.5 0.3 L4 4.3 Z" fill="#1c1c28"/></svg><svg style="left:585.2px;top:233.1px" width="15" height="15" viewBox="0 0 15 15"><defs><linearGradient id="ggr" x1="0" y1="0" x2="0" y2="1"><stop offset="0" stop-color="#e6e9f1"/><stop offset="1" stop-color="#a9b3c8"/></linearGradient></defs>
<path d="M13.81 6.42 L13.81 8.58 L11.99 8.89 L11.66 9.69 L12.73 11.19 L11.19 12.73 L9.69 11.66 L8.89 11.99 L8.58 13.81 L6.42 13.81 L6.11 11.99 L5.31 11.66 L3.81 12.73 L2.27 11.19 L3.34 9.69 L3.01 8.89 L1.19 8.58 L1.19 6.42 L3.01 6.11 L3.34 5.31 L2.27 3.81 L3.81 2.27 L5.31 3.34 L6.11 3.01 L6.42 1.19 L8.58 1.19 L8.89 3.01 L9.69 3.34 L11.19 2.27 L12.73 3.81 L11.66 5.31 L11.99 6.11 Z" fill="url(#ggr)" stroke="#3f4966" stroke-width="1.05" stroke-linejoin="round"/><circle cx="7.5" cy="7.5" r="1.9" fill="#fff" stroke="#3f4966" stroke-width="1.05"/></svg><div class="a" style="left:374px;top:275px;width:231px;height:1px;background:#d3d6de"></div><div class="a" style="left:374px;top:253px;width:1px;height:23px;background:#d3d6de"></div><svg style="left:357px;top:259px" width="16" height="10" viewBox="0 0 16 10"><path d="M0.6 0.7 L15.6 0.7 L14.6 3.6 L10.4 3.6 L8.4 9.3 L4.2 9.3 Z" fill="#0e9ade" stroke="#000" stroke-width="1.3"/><path d="M2.6 5.0 L9.8 5.0 L9.1 7.2 L3.5 7.2 Z" fill="#f4ee1c"/></svg><div class="t" style="left:378.5px;top:257px;letter-spacing:-0.325px;">770</div><div class="t" style="left:453px;top:257px;letter-spacing:-0.022px;">Blasts Strict [0]</div><svg style="left:571.5px;top:261.6px" width="8" height="5" viewBox="0 0 8 5"><path d="M0.5 0.3 L7.5 0.3 L4 4.3 Z" fill="#1c1c28"/></svg><svg style="left:585.2px;top:256.1px" width="15" height="15" viewBox="0 0 15 15"><defs><linearGradient id="ggr" x1="0" y1="0" x2="0" y2="1"><stop offset="0" stop-color="#e6e9f1"/><stop offset="1" stop-color="#a9b3c8"/></linearGradient></defs>
<path d="M13.81 6.42 L13.81 8.58 L11.99 8.89 L11.66 9.69 L12.73 11.19 L11.19 12.73 L9.69 11.66 L8.89 11.99 L8.58 13.81 L6.42 13.81 L6.11 11.99 L5.31 11.66 L3.81 12.73 L2.27 11.19 L3.34 9.69 L3.01 8.89 L1.19 8.58 L1.19 6.42 L3.01 6.11 L3.34 5.31 L2.27 3.81 L3.81 2.27 L5.31 3.34 L6.11 3.01 L6.42 1.19 L8.58 1.19 L8.89 3.01 L9.69 3.34 L11.19 2.27 L12.73 3.81 L11.66 5.31 L11.99 6.11 Z" fill="url(#ggr)" stroke="#3f4966" stroke-width="1.05" stroke-linejoin="round"/><circle cx="7.5" cy="7.5" r="1.9" fill="#fff" stroke="#3f4966" stroke-width="1.05"/></svg><div class="a" style="left:374px;top:298px;width:231px;height:1px;background:#d3d6de"></div><div class="a" style="left:374px;top:276px;width:1px;height:23px;background:#d3d6de"></div><svg style="left:357px;top:282px" width="16" height="10" viewBox="0 0 16 10"><path d="M0.6 0.7 L15.6 0.7 L14.6 3.6 L10.4 3.6 L8.4 9.3 L4.2 9.3 Z" fill="#0e9ade" stroke="#000" stroke-width="1.3"/><path d="M2.6 5.0 L9.8 5.0 L9.1 7.2 L3.5 7.2 Z" fill="#f4ee1c"/></svg><div class="t" style="left:378.5px;top:280px;letter-spacing:-0.325px;">760</div><div class="t" style="left:453px;top:280px;letter-spacing:-0.022px;">Blasts Strict [0]</div><svg style="left:571.5px;top:284.6px" width="8" height="5" viewBox="0 0 8 5"><path d="M0.5 0.3 L7.5 0.3 L4 4.3 Z" fill="#1c1c28"/></svg><svg style="left:585.2px;top:279.1px" width="15" height="15" viewBox="0 0 15 15"><defs><linearGradient id="ggr" x1="0" y1="0" x2="0" y2="1"><stop offset="0" stop-color="#e6e9f1"/><stop offset="1" stop-color="#a9b3c8"/></linearGradient></defs>
<path d="M13.81 6.42 L13.81 8.58 L11.99 8.89 L11.66 9.69 L12.73 11.19 L11.19 12.73 L9.69 11.66 L8.89 11.99 L8.58 13.81 L6.42 13.81 L6.11 11.99 L5.31 11.66 L3.81 12.73 L2.27 11.19 L3.34 9.69 L3.01 8.89 L1.19 8.58 L1.19 6.42 L3.01 6.11 L3.34 5.31 L2.27 3.81 L3.81 2.27 L5.31 3.34 L6.11 3.01 L6.42 1.19 L8.58 1.19 L8.89 3.01 L9.69 3.34 L11.19 2.27 L12.73 3.81 L11.66 5.31 L11.99 6.11 Z" fill="url(#ggr)" stroke="#3f4966" stroke-width="1.05" stroke-linejoin="round"/><circle cx="7.5" cy="7.5" r="1.9" fill="#fff" stroke="#3f4966" stroke-width="1.05"/></svg><div class="a" style="left:374px;top:321px;width:231px;height:1px;background:#d3d6de"></div><div class="a" style="left:374px;top:299px;width:1px;height:23px;background:#d3d6de"></div><svg style="left:357px;top:305px" width="16" height="10" viewBox="0 0 16 10"><path d="M0.6 0.7 L15.6 0.7 L14.6 3.6 L10.4 3.6 L8.4 9.3 L4.2 9.3 Z" fill="#0e9ade" stroke="#000" stroke-width="1.3"/><path d="M2.6 5.0 L9.8 5.0 L9.1 7.2 L3.5 7.2 Z" fill="#f4ee1c"/></svg><div class="t" style="left:378.5px;top:303px;letter-spacing:-0.325px;">750</div><div class="t" style="left:453px;top:303px;letter-spacing:-0.022px;">Blasts Strict [0]</div><svg style="left:571.5px;top:307.6px" width="8" height="5" viewBox="0 0 8 5"><path d="M0.5 0.3 L7.5 0.3 L4 4.3 Z" fill="#1c1c28"/></svg><svg style="left:585.2px;top:302.1px" width="15" height="15" viewBox="0 0 15 15"><defs><linearGradient id="ggr" x1="0" y1="0" x2="0" y2="1"><stop offset="0" stop-color="#e6e9f1"/><stop offset="1" stop-color="#a9b3c8"/></linearGradient></defs>
<path d="M13.81 6.42 L13.81 8.58 L11.99 8.89 L11.66 9.69 L12.73 11.19 L11.19 12.73 L9.69 11.66 L8.89 11.99 L8.58 13.81 L6.42 13.81 L6.11 11.99 L5.31 11.66 L3.81 12.73 L2.27 11.19 L3.34 9.69 L3.01 8.89 L1.19 8.58 L1.19 6.42 L3.01 6.11 L3.34 5.31 L2.27 3.81 L3.81 2.27 L5.31 3.34 L6.11 3.01 L6.42 1.19 L8.58 1.19 L8.89 3.01 L9.69 3.34 L11.19 2.27 L12.73 3.81 L11.66 5.31 L11.99 6.11 Z" fill="url(#ggr)" stroke="#3f4966" stroke-width="1.05" stroke-linejoin="round"/><circle cx="7.5" cy="7.5" r="1.9" fill="#fff" stroke="#3f4966" stroke-width="1.05"/></svg><div class="a" style="left:374px;top:344px;width:231px;height:1px;background:#d3d6de"></div><div class="a" style="left:374px;top:322px;width:1px;height:23px;background:#d3d6de"></div><svg style="left:357px;top:328px" width="16" height="10" viewBox="0 0 16 10"><path d="M0.6 0.7 L15.6 0.7 L14.6 3.6 L10.4 3.6 L8.4 9.3 L4.2 9.3 Z" fill="#0e9ade" stroke="#000" stroke-width="1.3"/><path d="M2.6 5.0 L9.8 5.0 L9.1 7.2 L3.5 7.2 Z" fill="#f4ee1c"/></svg><div class="t" style="left:378.5px;top:326px;letter-spacing:-0.325px;">740</div><div class="t" style="left:453px;top:326px;letter-spacing:-0.022px;">Blasts Strict [0]</div><svg style="left:571.5px;top:330.6px" width="8" height="5" viewBox="0 0 8 5"><path d="M0.5 0.3 L7.5 0.3 L4 4.3 Z" fill="#1c1c28"/></svg><svg style="left:585.2px;top:325.1px" width="15" height="15" viewBox="0 0 15 15"><defs><linearGradient id="ggr" x1="0" y1="0" x2="0" y2="1"><stop offset="0" stop-color="#e6e9f1"/><stop offset="1" stop-color="#a9b3c8"/></linearGradient></defs>
<path d="M13.81 6.42 L13.81 8.58 L11.99 8.89 L11.66 9.69 L12.73 11.19 L11.19 12.73 L9.69 11.66 L8.89 11.99 L8.58 13.81 L6.42 13.81 L6.11 11.99 L5.31 11.66 L3.81 12.73 L2.27 11.19 L3.34 9.69 L3.01 8.89 L1.19 8.58 L1.19 6.42 L3.01 6.11 L3.34 5.31 L2.27 3.81 L3.81 2.27 L5.31 3.34 L6.11 3.01 L6.42 1.19 L8.58 1.19 L8.89 3.01 L9.69 3.34 L11.19 2.27 L12.73 3.81 L11.66 5.31 L11.99 6.11 Z" fill="url(#ggr)" stroke="#3f4966" stroke-width="1.05" stroke-linejoin="round"/><circle cx="7.5" cy="7.5" r="1.9" fill="#fff" stroke="#3f4966" stroke-width="1.05"/></svg><div class="a" style="left:374px;top:367px;width:231px;height:1px;background:#d3d6de"></div><div class="a" style="left:374px;top:345px;width:1px;height:23px;background:#d3d6de"></div><svg style="left:357px;top:351px" width="16" height="10" viewBox="0 0 16 10"><path d="M0.6 0.7 L15.6 0.7 L14.6 3.6 L10.4 3.6 L8.4 9.3 L4.2 9.3 Z" fill="#0e9ade" stroke="#000" stroke-width="1.3"/><path d="M2.6 5.0 L9.8 5.0 L9.1 7.2 L3.5 7.2 Z" fill="#f4ee1c"/></svg><div class="t" style="left:378.5px;top:349px;letter-spacing:-0.325px;">730</div><div class="t" style="left:453px;top:349px;letter-spacing:-0.022px;">Blasts Strict [0]</div><svg style="left:571.5px;top:353.6px" width="8" height="5" viewBox="0 0 8 5"><path d="M0.5 0.3 L7.5 0.3 L4 4.3 Z" fill="#1c1c28"/></svg><svg style="left:585.2px;top:348.1px" width="15" height="15" viewBox="0 0 15 15"><defs><linearGradient id="ggr" x1="0" y1="0" x2="0" y2="1"><stop offset="0" stop-color="#e6e9f1"/><stop offset="1" stop-color="#a9b3c8"/></linearGradient></defs>
<path d="M13.81 6.42 L13.81 8.58 L11.99 8.89 L11.66 9.69 L12.73 11.19 L11.19 12.73 L9.69 11.66 L8.89 11.99 L8.58 13.81 L6.42 13.81 L6.11 11.99 L5.31 11.66 L3.81 12.73 L2.27 11.19 L3.34 9.69 L3.01 8.89 L1.19 8.58 L1.19 6.42 L3.01 6.11 L3.34 5.31 L2.27 3.81 L3.81 2.27 L5.31 3.34 L6.11 3.01 L6.42 1.19 L8.58 1.19 L8.89 3.01 L9.69 3.34 L11.19 2.27 L12.73 3.81 L11.66 5.31 L11.99 6.11 Z" fill="url(#ggr)" stroke="#3f4966" stroke-width="1.05" stroke-linejoin="round"/><circle cx="7.5" cy="7.5" r="1.9" fill="#fff" stroke="#3f4966" stroke-width="1.05"/></svg><div class="a" style="left:374px;top:390px;width:231px;height:1px;background:#d3d6de"></div><div class="a" style="left:374px;top:368px;width:1px;height:23px;background:#d3d6de"></div><svg style="left:357px;top:374px" width="16" height="10" viewBox="0 0 16 10"><path d="M0.6 0.7 L15.6 0.7 L14.6 3.6 L10.4 3.6 L8.4 9.3 L4.2 9.3 Z" fill="#0e9ade" stroke="#000" stroke-width="1.3"/><path d="M2.6 5.0 L9.8 5.0 L9.1 7.2 L3.5 7.2 Z" fill="#f4ee1c"/></svg><div class="t" style="left:378.5px;top:372px;letter-spacing:-0.325px;">720</div><div class="t" style="left:453px;top:372px;letter-spacing:-0.022px;">Blasts Strict [5]</div><svg style="left:571.5px;top:376.6px" width="8" height="5" viewBox="0 0 8 5"><path d="M0.5 0.3 L7.5 0.3 L4 4.3 Z" fill="#1c1c28"/></svg><svg style="left:585.2px;top:371.1px" width="15" height="15" viewBox="0 0 15 15"><defs><linearGradient id="ggr" x1="0" y1="0" x2="0" y2="1"><stop offset="0" stop-color="#e6e9f1"/><stop offset="1" stop-color="#a9b3c8"/></linearGradient></defs>
<path d="M13.81 6.42 L13.81 8.58 L11.99 8.89 L11.66 9.69 L12.73 11.19 L11.19 12.73 L9.69 11.66 L8.89 11.99 L8.58 13.81 L6.42 13.81 L6.11 11.99 L5.31 11.66 L3.81 12.73 L2.27 11.19 L3.34 9.69 L3.01 8.89 L1.19 8.58 L1.19 6.42 L3.01 6.11 L3.34 5.31 L2.27 3.81 L3.81 2.27 L5.31 3.34 L6.11 3.01 L6.42 1.19 L8.58 1.19 L8.89 3.01 L9.69 3.34 L11.19 2.27 L12.73 3.81 L11.66 5.31 L11.99 6.11 Z" fill="url(#ggr)" stroke="#3f4966" stroke-width="1.05" stroke-linejoin="round"/><circle cx="7.5" cy="7.5" r="1.9" fill="#fff" stroke="#3f4966" stroke-width="1.05"/></svg><div class="a" style="left:374px;top:413px;width:231px;height:1px;background:#d3d6de"></div><div class="a" style="left:374px;top:391px;width:1px;height:23px;background:#d3d6de"></div><svg style="left:357px;top:397px" width="16" height="10" viewBox="0 0 16 10"><path d="M0.6 0.7 L15.6 0.7 L14.6 3.6 L10.4 3.6 L8.4 9.3 L4.2 9.3 Z" fill="#0e9ade" stroke="#000" stroke-width="1.3"/><path d="M2.6 5.0 L9.8 5.0 L9.1 7.2 L3.5 7.2 Z" fill="#f4ee1c"/></svg><div class="t" style="left:378.5px;top:395px;letter-spacing:-0.325px;">710</div><div class="t" style="left:453px;top:395px;letter-spacing:-0.022px;">Blasts Strict [0]</div><svg style="left:571.5px;top:399.6px" width="8" height="5" viewBox="0 0 8 5"><path d="M0.5 0.3 L7.5 0.3 L4 4.3 Z" fill="#1c1c28"/></svg><svg style="left:585.2px;top:394.1px" width="15" height="15" viewBox="0 0 15 15"><defs><linearGradient id="ggr" x1="0" y1="0" x2="0" y2="1"><stop offset="0" stop-color="#e6e9f1"/><stop offset="1" stop-color="#a9b3c8"/></linearGradient></defs>
<path d="M13.81 6.42 L13.81 8.58 L11.99 8.89 L11.66 9.69 L12.73 11.19 L11.19 12.73 L9.69 11.66 L8.89 11.99 L8.58 13.81 L6.42 13.81 L6.11 11.99 L5.31 11.66 L3.81 12.73 L2.27 11.19 L3.34 9.69 L3.01 8.89 L1.19 8.58 L1.19 6.42 L3.01 6.11 L3.34 5.31 L2.27 3.81 L3.81 2.27 L5.31 3.34 L6.11 3.01 L6.42 1.19 L8.58 1.19 L8.89 3.01 L9.69 3.34 L11.19 2.27 L12.73 3.81 L11.66 5.31 L11.99 6.11 Z" fill="url(#ggr)" stroke="#3f4966" stroke-width="1.05" stroke-linejoin="round"/><circle cx="7.5" cy="7.5" r="1.9" fill="#fff" stroke="#3f4966" stroke-width="1.05"/></svg><div class="a" style="left:374px;top:436px;width:231px;height:1px;background:#d3d6de"></div><div class="a" style="left:374px;top:414px;width:1px;height:23px;background:#d3d6de"></div><svg style="left:357px;top:420px" width="16" height="10" viewBox="0 0 16 10"><path d="M0.6 0.7 L15.6 0.7 L14.6 3.6 L10.4 3.6 L8.4 9.3 L4.2 9.3 Z" fill="#0e9ade" stroke="#000" stroke-width="1.3"/><path d="M2.6 5.0 L9.8 5.0 L9.1 7.2 L3.5 7.2 Z" fill="#f4ee1c"/></svg><div class="t" style="left:378.5px;top:418px;letter-spacing:-0.325px;">700</div><div class="t" style="left:453px;top:418px;letter-spacing:-0.022px;">Blasts Strict [0]</div><svg style="left:571.5px;top:422.6px" width="8" height="5" viewBox="0 0 8 5"><path d="M0.5 0.3 L7.5 0.3 L4 4.3 Z" fill="#1c1c28"/></svg><svg style="left:585.2px;top:417.1px" width="15" height="15" viewBox="0 0 15 15"><defs><linearGradient id="ggr" x1="0" y1="0" x2="0" y2="1"><stop offset="0" stop-color="#e6e9f1"/><stop offset="1" stop-color="#a9b3c8"/></linearGradient></defs>
<path d="M13.81 6.42 L13.81 8.58 L11.99 8.89 L11.66 9.69 L12.73 11.19 L11.19 12.73 L9.69 11.66 L8.89 11.99 L8.58 13.81 L6.42 13.81 L6.11 11.99 L5.31 11.66 L3.81 12.73 L2.27 11.19 L3.34 9.69 L3.01 8.89 L1.19 8.58 L1.19 6.42 L3.01 6.11 L3.34 5.31 L2.27 3.81 L3.81 2.27 L5.31 3.34 L6.11 3.01 L6.42 1.19 L8.58 1.19 L8.89 3.01 L9.69 3.34 L11.19 2.27 L12.73 3.81 L11.66 5.31 L11.99 6.11 Z" fill="url(#ggr)" stroke="#3f4966" stroke-width="1.05" stroke-linejoin="round"/><circle cx="7.5" cy="7.5" r="1.9" fill="#fff" stroke="#3f4966" stroke-width="1.05"/></svg><div class="a" style="left:356px;top:459px;width:249px;height:1px;background:#d3d6de"></div><div class="a" style="left:356px;top:437px;width:1px;height:23px;background:#d3d6de"></div><svg style="left:327px;top:444px" width="5" height="8" viewBox="0 0 5 8"><path d="M0.6 0.4 L4.4 4 L0.6 7.6 Z" fill="#8d91a0"/></svg><svg style="left:339px;top:443px" width="16" height="10" viewBox="0 0 16 10"><path d="M0.6 0.7 L15.6 0.7 L14.6 3.6 L10.4 3.6 L8.4 9.3 L4.2 9.3 Z" fill="#0e9ade" stroke="#000" stroke-width="1.3"/><path d="M1.9 1.3 L4.1 1.3 L6.9 8.7 L4.7 8.7 Z" fill="#f4ee1c"/></svg><div class="t" style="left:360.5px;top:441px;letter-spacing:-0.146px;">Stage2</div><div class="t" style="left:453px;top:441px;letter-spacing:-0.082px;">Blasts Strict</div><svg style="left:571.5px;top:445.6px" width="8" height="5" viewBox="0 0 8 5"><path d="M0.5 0.3 L7.5 0.3 L4 4.3 Z" fill="#1c1c28"/></svg><svg style="left:585.2px;top:440.1px" width="15" height="15" viewBox="0 0 15 15"><defs><linearGradient id="ggr" x1="0" y1="0" x2="0" y2="1"><stop offset="0" stop-color="#e6e9f1"/><stop offset="1" stop-color="#a9b3c8"/></linearGradient></defs>
<path d="M13.81 6.42 L13.81 8.58 L11.99 8.89 L11.66 9.69 L12.73 11.19 L11.19 12.73 L9.69 11.66 L8.89 11.99 L8.58 13.81 L6.42 13.81 L6.11 11.99 L5.31 11.66 L3.81 12.73 L2.27 11.19 L3.34 9.69 L3.01 8.89 L1.19 8.58 L1.19 6.42 L3.01 6.11 L3.34 5.31 L2.27 3.81 L3.81 2.27 L5.31 3.34 L6.11 3.01 L6.42 1.19 L8.58 1.19 L8.89 3.01 L9.69 3.34 L11.19 2.27 L12.73 3.81 L11.66 5.31 L11.99 6.11 Z" fill="url(#ggr)" stroke="#3f4966" stroke-width="1.05" stroke-linejoin="round"/><circle cx="7.5" cy="7.5" r="1.9" fill="#fff" stroke="#3f4966" stroke-width="1.05"/></svg><div class="a" style="left:338px;top:482px;width:267px;height:1px;background:#d3d6de"></div><div class="a" style="left:338px;top:460px;width:1px;height:23px;background:#d3d6de"></div><svg style="left:306px;top:470.6px" width="8" height="5" viewBox="0 0 8 5"><path d="M0.5 0.5 L7.5 0.5 L4 4.5 Z" fill="#80859a"/></svg><svg style="left:321px;top:466px" width="16" height="10" viewBox="0 0 16 10"><path d="M0.6 0.7 L15.6 0.7 L14.6 3.6 L10.4 3.6 L8.4 9.3 L4.2 9.3 Z" fill="#0e9ade" stroke="#000" stroke-width="1.3" stroke-linejoin="miter"/></svg><div class="t" style="left:342.5px;top:464px;letter-spacing:-0.259px;">Pit2</div><div class="t" style="left:453px;top:464px;letter-spacing:-0.082px;">Blasts Strict</div><svg style="left:571.5px;top:468.6px" width="8" height="5" viewBox="0 0 8 5"><path d="M0.5 0.3 L7.5 0.3 L4 4.3 Z" fill="#1c1c28"/></svg><svg style="left:585.2px;top:463.1px" width="15" height="15" viewBox="0 0 15 15"><defs><linearGradient id="ggr" x1="0" y1="0" x2="0" y2="1"><stop offset="0" stop-color="#e6e9f1"/><stop offset="1" stop-color="#a9b3c8"/></linearGradient></defs>
<path d="M13.81 6.42 L13.81 8.58 L11.99 8.89 L11.66 9.69 L12.73 11.19 L11.19 12.73 L9.69 11.66 L8.89 11.99 L8.58 13.81 L6.42 13.81 L6.11 11.99 L5.31 11.66 L3.81 12.73 L2.27 11.19 L3.34 9.69 L3.01 8.89 L1.19 8.58 L1.19 6.42 L3.01 6.11 L3.34 5.31 L2.27 3.81 L3.81 2.27 L5.31 3.34 L6.11 3.01 L6.42 1.19 L8.58 1.19 L8.89 3.01 L9.69 3.34 L11.19 2.27 L12.73 3.81 L11.66 5.31 L11.99 6.11 Z" fill="url(#ggr)" stroke="#3f4966" stroke-width="1.05" stroke-linejoin="round"/><circle cx="7.5" cy="7.5" r="1.9" fill="#fff" stroke="#3f4966" stroke-width="1.05"/></svg><div class="a" style="left:356px;top:505px;width:249px;height:1px;background:#d3d6de"></div><div class="a" style="left:356px;top:483px;width:1px;height:23px;background:#d3d6de"></div><svg style="left:327px;top:490px" width="5" height="8" viewBox="0 0 5 8"><path d="M0.6 0.4 L4.4 4 L0.6 7.6 Z" fill="#8d91a0"/></svg><svg style="left:339px;top:489px" width="16" height="10" viewBox="0 0 16 10"><path d="M0.6 0.7 L15.6 0.7 L14.6 3.6 L10.4 3.6 L8.4 9.3 L4.2 9.3 Z" fill="#0e9ade" stroke="#000" stroke-width="1.3"/><path d="M1.9 1.3 L4.1 1.3 L6.9 8.7 L4.7 8.7 Z" fill="#f4ee1c"/></svg><div class="t" style="left:360.5px;top:487px;letter-spacing:-0.230px;">Stage</div><div class="t" style="left:453px;top:487px;letter-spacing:-0.082px;">Blasts Strict</div><svg style="left:571.5px;top:491.6px" width="8" height="5" viewBox="0 0 8 5"><path d="M0.5 0.3 L7.5 0.3 L4 4.3 Z" fill="#1c1c28"/></svg><svg style="left:585.2px;top:486.1px" width="15" height="15" viewBox="0 0 15 15"><defs><linearGradient id="ggr" x1="0" y1="0" x2="0" y2="1"><stop offset="0" stop-color="#e6e9f1"/><stop offset="1" stop-color="#a9b3c8"/></linearGradient></defs>
<path d="M13.81 6.42 L13.81 8.58 L11.99 8.89 L11.66 9.69 L12.73 11.19 L11.19 12.73 L9.69 11.66 L8.89 11.99 L8.58 13.81 L6.42 13.81 L6.11 11.99 L5.31 11.66 L3.81 12.73 L2.27 11.19 L3.34 9.69 L3.01 8.89 L1.19 8.58 L1.19 6.42 L3.01 6.11 L3.34 5.31 L2.27 3.81 L3.81 2.27 L5.31 3.34 L6.11 3.01 L6.42 1.19 L8.58 1.19 L8.89 3.01 L9.69 3.34 L11.19 2.27 L12.73 3.81 L11.66 5.31 L11.99 6.11 Z" fill="url(#ggr)" stroke="#3f4966" stroke-width="1.05" stroke-linejoin="round"/><circle cx="7.5" cy="7.5" r="1.9" fill="#fff" stroke="#3f4966" stroke-width="1.05"/></svg><div class="a" style="left:338px;top:528px;width:267px;height:1px;background:#d3d6de"></div><div class="a" style="left:338px;top:506px;width:1px;height:23px;background:#d3d6de"></div><svg style="left:306px;top:516.6px" width="8" height="5" viewBox="0 0 8 5"><path d="M0.5 0.5 L7.5 0.5 L4 4.5 Z" fill="#80859a"/></svg><svg style="left:321px;top:512px" width="16" height="10" viewBox="0 0 16 10"><path d="M0.6 0.7 L15.6 0.7 L14.6 3.6 L10.4 3.6 L8.4 9.3 L4.2 9.3 Z" fill="#0e9ade" stroke="#000" stroke-width="1.3" stroke-linejoin="miter"/></svg><div class="t" style="left:342.5px;top:510px;letter-spacing:-0.259px;">Pit3</div><div class="t" style="left:453px;top:510px;letter-spacing:-0.082px;">Blasts Strict</div><svg style="left:571.5px;top:514.6px" width="8" height="5" viewBox="0 0 8 5"><path d="M0.5 0.3 L7.5 0.3 L4 4.3 Z" fill="#1c1c28"/></svg><svg style="left:585.2px;top:509.1px" width="15" height="15" viewBox="0 0 15 15"><defs><linearGradient id="ggr" x1="0" y1="0" x2="0" y2="1"><stop offset="0" stop-color="#e6e9f1"/><stop offset="1" stop-color="#a9b3c8"/></linearGradient></defs>
<path d="M13.81 6.42 L13.81 8.58 L11.99 8.89 L11.66 9.69 L12.73 11.19 L11.19 12.73 L9.69 11.66 L8.89 11.99 L8.58 13.81 L6.42 13.81 L6.11 11.99 L5.31 11.66 L3.81 12.73 L2.27 11.19 L3.34 9.69 L3.01 8.89 L1.19 8.58 L1.19 6.42 L3.01 6.11 L3.34 5.31 L2.27 3.81 L3.81 2.27 L5.31 3.34 L6.11 3.01 L6.42 1.19 L8.58 1.19 L8.89 3.01 L9.69 3.34 L11.19 2.27 L12.73 3.81 L11.66 5.31 L11.99 6.11 Z" fill="url(#ggr)" stroke="#3f4966" stroke-width="1.05" stroke-linejoin="round"/><circle cx="7.5" cy="7.5" r="1.9" fill="#fff" stroke="#3f4966" stroke-width="1.05"/></svg><div class="a" style="left:356px;top:551px;width:249px;height:1px;background:#d3d6de"></div><div class="a" style="left:356px;top:529px;width:1px;height:23px;background:#d3d6de"></div><svg style="left:327px;top:536px" width="5" height="8" viewBox="0 0 5 8"><path d="M0.6 0.4 L4.4 4 L0.6 7.6 Z" fill="#8d91a0"/></svg><svg style="left:339px;top:535px" width="16" height="10" viewBox="0 0 16 10"><path d="M0.6 0.7 L15.6 0.7 L14.6 3.6 L10.4 3.6 L8.4 9.3 L4.2 9.3 Z" fill="#0e9ade" stroke="#000" stroke-width="1.3"/><path d="M1.9 1.3 L4.1 1.3 L6.9 8.7 L4.7 8.7 Z" fill="#f4ee1c"/></svg><div class="t" style="left:360.5px;top:533px;letter-spacing:-0.230px;">Stage</div><div class="t" style="left:453px;top:533px;letter-spacing:-0.082px;">Blasts Strict</div><svg style="left:571.5px;top:537.6px" width="8" height="5" viewBox="0 0 8 5"><path d="M0.5 0.3 L7.5 0.3 L4 4.3 Z" fill="#1c1c28"/></svg><svg style="left:585.2px;top:532.1px" width="15" height="15" viewBox="0 0 15 15"><defs><linearGradient id="ggr" x1="0" y1="0" x2="0" y2="1"><stop offset="0" stop-color="#e6e9f1"/><stop offset="1" stop-color="#a9b3c8"/></linearGradient></defs>
<path d="M13.81 6.42 L13.81 8.58 L11.99 8.89 L11.66 9.69 L12.73 11.19 L11.19 12.73 L9.69 11.66 L8.89 11.99 L8.58 13.81 L6.42 13.81 L6.11 11.99 L5.31 11.66 L3.81 12.73 L2.27 11.19 L3.34 9.69 L3.01 8.89 L1.19 8.58 L1.19 6.42 L3.01 6.11 L3.34 5.31 L2.27 3.81 L3.81 2.27 L5.31 3.34 L6.11 3.01 L6.42 1.19 L8.58 1.19 L8.89 3.01 L9.69 3.34 L11.19 2.27 L12.73 3.81 L11.66 5.31 L11.99 6.11 Z" fill="url(#ggr)" stroke="#3f4966" stroke-width="1.05" stroke-linejoin="round"/><circle cx="7.5" cy="7.5" r="1.9" fill="#fff" stroke="#3f4966" stroke-width="1.05"/></svg><div class="a" style="left:302px;top:574px;width:303px;height:1px;background:#d3d6de"></div><div class="a" style="left:302px;top:552px;width:1px;height:23px;background:#d3d6de"></div><svg style="left:270px;top:562.6px" width="8" height="5" viewBox="0 0 8 5"><path d="M0.5 0.5 L7.5 0.5 L4 4.5 Z" fill="#80859a"/></svg><svg style="left:284px;top:557px" width="17" height="13" viewBox="0 0 17 13"><g stroke="#000" stroke-width="1.1"><path d="M9.3 0.6 L13.2 0.6 L16.4 7 L7.8 7 Z" fill="#f0531e"/><path d="M6.8 2.8 L10.2 2.8 L13 8.6 L4.8 8.6 Z" fill="#f4ee1c"/><path d="M3.6 5.3 L7.4 5.3 L10.4 12.4 L0.6 12.4 Z" fill="#f0531e"/></g></svg><div class="t" style="left:306.5px;top:556px;letter-spacing:-0.655px;">Dumps</div><div class="t" style="left:453px;top:556px;letter-spacing:-0.112px;">Bearing Strict</div><svg style="left:571.5px;top:560.6px" width="8" height="5" viewBox="0 0 8 5"><path d="M0.5 0.3 L7.5 0.3 L4 4.3 Z" fill="#1c1c28"/></svg><svg style="left:585.2px;top:555.1px" width="15" height="15" viewBox="0 0 15 15"><defs><linearGradient id="ggr" x1="0" y1="0" x2="0" y2="1"><stop offset="0" stop-color="#e6e9f1"/><stop offset="1" stop-color="#a9b3c8"/></linearGradient></defs>
<path d="M13.81 6.42 L13.81 8.58 L11.99 8.89 L11.66 9.69 L12.73 11.19 L11.19 12.73 L9.69 11.66 L8.89 11.99 L8.58 13.81 L6.42 13.81 L6.11 11.99 L5.31 11.66 L3.81 12.73 L2.27 11.19 L3.34 9.69 L3.01 8.89 L1.19 8.58 L1.19 6.42 L3.01 6.11 L3.34 5.31 L2.27 3.81 L3.81 2.27 L5.31 3.34 L6.11 3.01 L6.42 1.19 L8.58 1.19 L8.89 3.01 L9.69 3.34 L11.19 2.27 L12.73 3.81 L11.66 5.31 L11.99 6.11 Z" fill="url(#ggr)" stroke="#3f4966" stroke-width="1.05" stroke-linejoin="round"/><circle cx="7.5" cy="7.5" r="1.9" fill="#fff" stroke="#3f4966" stroke-width="1.05"/></svg><div class="a" style="left:320px;top:597px;width:285px;height:1px;background:#d3d6de"></div><div class="a" style="left:320px;top:575px;width:1px;height:23px;background:#d3d6de"></div><svg style="left:291px;top:582px" width="5" height="8" viewBox="0 0 5 8"><path d="M0.6 0.4 L4.4 4 L0.6 7.6 Z" fill="#8d91a0"/></svg><svg style="left:303px;top:581px" width="16" height="10" viewBox="0 0 16 10"><path d="M4.6 1.2 L11.4 1.2 L15.4 9.4 L0.6 9.4 Z" fill="#f0531e" stroke="#000" stroke-width="1.2"/></svg><div class="t" style="left:324.5px;top:579px;letter-spacing:-0.460px;">Dump1</div><div class="t" style="left:453px;top:579px;letter-spacing:-0.112px;">Bearing Strict</div><svg style="left:571.5px;top:583.6px" width="8" height="5" viewBox="0 0 8 5"><path d="M0.5 0.3 L7.5 0.3 L4 4.3 Z" fill="#1c1c28"/></svg><svg style="left:585.2px;top:578.1px" width="15" height="15" viewBox="0 0 15 15"><defs><linearGradient id="ggr" x1="0" y1="0" x2="0" y2="1"><stop offset="0" stop-color="#e6e9f1"/><stop offset="1" stop-color="#a9b3c8"/></linearGradient></defs>
<path d="M13.81 6.42 L13.81 8.58 L11.99 8.89 L11.66 9.69 L12.73 11.19 L11.19 12.73 L9.69 11.66 L8.89 11.99 L8.58 13.81 L6.42 13.81 L6.11 11.99 L5.31 11.66 L3.81 12.73 L2.27 11.19 L3.34 9.69 L3.01 8.89 L1.19 8.58 L1.19 6.42 L3.01 6.11 L3.34 5.31 L2.27 3.81 L3.81 2.27 L5.31 3.34 L6.11 3.01 L6.42 1.19 L8.58 1.19 L8.89 3.01 L9.69 3.34 L11.19 2.27 L12.73 3.81 L11.66 5.31 L11.99 6.11 Z" fill="url(#ggr)" stroke="#3f4966" stroke-width="1.05" stroke-linejoin="round"/><circle cx="7.5" cy="7.5" r="1.9" fill="#fff" stroke="#3f4966" stroke-width="1.05"/></svg><div class="a" style="left:320px;top:620px;width:285px;height:1px;background:#d3d6de"></div><div class="a" style="left:320px;top:598px;width:1px;height:23px;background:#d3d6de"></div><svg style="left:291px;top:605px" width="5" height="8" viewBox="0 0 5 8"><path d="M0.6 0.4 L4.4 4 L0.6 7.6 Z" fill="#8d91a0"/></svg><svg style="left:303px;top:604px" width="16" height="10" viewBox="0 0 16 10"><path d="M4.6 1.2 L11.4 1.2 L15.4 9.4 L0.6 9.4 Z" fill="#f0531e" stroke="#000" stroke-width="1.2"/></svg><div class="t" style="left:324.5px;top:602px;letter-spacing:-0.460px;">Dump2</div><div class="t" style="left:453px;top:602px;letter-spacing:-0.112px;">Bearing Strict</div><svg style="left:571.5px;top:606.6px" width="8" height="5" viewBox="0 0 8 5"><path d="M0.5 0.3 L7.5 0.3 L4 4.3 Z" fill="#1c1c28"/></svg><svg style="left:585.2px;top:601.1px" width="15" height="15" viewBox="0 0 15 15"><defs><linearGradient id="ggr" x1="0" y1="0" x2="0" y2="1"><stop offset="0" stop-color="#e6e9f1"/><stop offset="1" stop-color="#a9b3c8"/></linearGradient></defs>
<path d="M13.81 6.42 L13.81 8.58 L11.99 8.89 L11.66 9.69 L12.73 11.19 L11.19 12.73 L9.69 11.66 L8.89 11.99 L8.58 13.81 L6.42 13.81 L6.11 11.99 L5.31 11.66 L3.81 12.73 L2.27 11.19 L3.34 9.69 L3.01 8.89 L1.19 8.58 L1.19 6.42 L3.01 6.11 L3.34 5.31 L2.27 3.81 L3.81 2.27 L5.31 3.34 L6.11 3.01 L6.42 1.19 L8.58 1.19 L8.89 3.01 L9.69 3.34 L11.19 2.27 L12.73 3.81 L11.66 5.31 L11.99 6.11 Z" fill="url(#ggr)" stroke="#3f4966" stroke-width="1.05" stroke-linejoin="round"/><circle cx="7.5" cy="7.5" r="1.9" fill="#fff" stroke="#3f4966" stroke-width="1.05"/></svg><div class="a" style="left:320px;top:643px;width:285px;height:1px;background:#d3d6de"></div><div class="a" style="left:320px;top:621px;width:1px;height:23px;background:#d3d6de"></div><svg style="left:571.5px;top:629.6px" width="8" height="5" viewBox="0 0 8 5"><path d="M0.5 0.3 L7.5 0.3 L4 4.3 Z" fill="#1c1c28"/></svg><svg style="left:585.2px;top:624.1px" width="15" height="15" viewBox="0 0 15 15"><defs><linearGradient id="ggr" x1="0" y1="0" x2="0" y2="1"><stop offset="0" stop-color="#e6e9f1"/><stop offset="1" stop-color="#a9b3c8"/></linearGradient></defs>
<path d="M13.81 6.42 L13.81 8.58 L11.99 8.89 L11.66 9.69 L12.73 11.19 L11.19 12.73 L9.69 11.66 L8.89 11.99 L8.58 13.81 L6.42 13.81 L6.11 11.99 L5.31 11.66 L3.81 12.73 L2.27 11.19 L3.34 9.69 L3.01 8.89 L1.19 8.58 L1.19 6.42 L3.01 6.11 L3.34 5.31 L2.27 3.81 L3.81 2.27 L5.31 3.34 L6.11 3.01 L6.42 1.19 L8.58 1.19 L8.89 3.01 L9.69 3.34 L11.19 2.27 L12.73 3.81 L11.66 5.31 L11.99 6.11 Z" fill="url(#ggr)" stroke="#3f4966" stroke-width="1.05" stroke-linejoin="round"/><circle cx="7.5" cy="7.5" r="1.9" fill="#fff" stroke="#3f4966" stroke-width="1.05"/></svg></div><div class="a" style="left:605px;top:92px;width:17px;height:534px;background:#f4f5f8"></div><svg style="left:610px;top:99px" width="8" height="5" viewBox="0 0 8 5"><path d="M0.5 4.5 L7.5 4.5 L4 0.5 Z" fill="#80859a"/></svg><div class="a" style="left:610px;top:108px;width:7px;height:480px;border:1px solid #a4a9b8;border-radius:3.5px;background:linear-gradient(90deg,#f5f6f9,#dcdfe7)"></div><svg style="left:610px;top:615px" width="8" height="5" viewBox="0 0 8 5"><path d="M0.5 0.5 L7.5 0.5 L4 4.5 Z" fill="#80859a"/></svg><div class="a" style="left:632px;top:33px;width:846px;height:594px;background:#e9ebef"></div><div class="a" style="left:651px;top:166px;width:808px;height:461px;background:#fff"></div><div class="a" style="left:632px;top:38px;width:19px;height:48px;border:1px solid #a9aebb;border-left:none;background:linear-gradient(90deg,#eceef2,#dfe1e7)"></div><div class="t" style="left:611px;top:53.2px;width:60px;text-align:center;transform:rotate(90deg);color:#2a2b45">Layers</div><div class="a" style="left:1461px;top:38px;width:17px;height:39px;border:1px solid #a9aebb;border-right:none;background:linear-gradient(90deg,#dfe1e7,#eceef2)"></div><div class="t" style="left:1440px;top:49px;width:60px;text-align:center;transform:rotate(90deg);color:#2a2b45">Data</div><div class="a" style="left:653px;top:35px;width:804px;height:131px;border:1px solid #9fa4b2;background:#e9ebef"></div><div class="a" style="left:654px;top:36px;width:802px;height:19px;background:#e0e2e7"></div><div class="t" style="left:659px;top:39px;letter-spacing:0.031px;font-weight:bold;-webkit-text-stroke:0.25px;font-size:11.5px;color:#8f92a0">Viewport Display</div><svg style="left:1438.5px;top:41px" width="10" height="10" viewBox="0 0 10 10"><path d="M2.5 1 L6.5 1 L6.5 5.5 L2.5 5.5 Z" fill="#e6e7ec" stroke="#82869a" stroke-width="1"/><path d="M5 1 L6.5 1 L6.5 5.5 L5 5.5 Z M1 6 L8 6 M4.5 6 L4.5 9.5" fill="#82869a" stroke="#82869a" stroke-width="1"/></svg><div class="btn" style="left:658px;top:58px;width:105px;height:28px;"></div><div class="a" style="left:746px;top:59px;width:1px;height:26px;background:#b7bbc7"></div><svg style="left:662px;top:65px" width="15" height="14" viewBox="0 0 15 14"><rect x="0.5" y="0.5" width="14" height="13" fill="#f6f6f6" stroke="#6f6f6f" stroke-width="1"/>
<g fill="#8c8c8c"><rect x="2.4" y="2.2" width="2.6" height="2.6"/><rect x="6.2" y="2.2" width="2.6" height="2.6"/><rect x="10" y="2.2" width="2.6" height="2.6" fill="#b5b5b5"/>
<rect x="2.4" y="5.8" width="2.6" height="2.6"/><rect x="6.2" y="5.8" width="2.6" height="2.6"/><rect x="10" y="5.8" width="2.6" height="2.6"/>
<rect x="2.4" y="9.4" width="2.6" height="2.6"/><rect x="6.2" y="9.4" width="2.6" height="2.6"/><rect x="10" y="9.4" width="2.6" height="2.6"/></g></svg><div class="t" style="left:680.5px;top:65px;letter-spacing:-0.389px;color:#1f2038">Label Display</div><svg style="left:751px;top:71px" width="8" height="5" viewBox="0 0 8 5"><path d="M0.5 0.5 L7.5 0.5 L4 4.5 Z" fill="#80859a"/></svg><div class="inp" style="left:769px;top:62px;width:682px;height:20px;"></div><div class="t" style="left:773.5px;top:65px;letter-spacing:-0.208px;font-weight:bold;-webkit-text-stroke:0.25px;font-size:11.5px;color:#7d7d7d">Label:</div><div class="t" style="left:810.5px;top:65px;letter-spacing:0.251px;font-weight:bold;-webkit-text-stroke:0.25px;font-size:11.5px;color:#18b4ec">&lt;Record Name&gt;</div><svg style="left:1439px;top:70px" width="8" height="5" viewBox="0 0 8 5"><path d="M0.5 0.3 L7.5 0.3 L4 4.3 Z" fill="#1c1c28"/></svg><div class="inp" style="left:659px;top:94px;width:392px;height:20px;"></div><div class="t" style="left:664px;top:97px;letter-spacing:-0.030px;font-weight:bold;-webkit-text-stroke:0.25px;font-size:11.5px;color:#7d7d7d">Reserves Shading:</div><div class="t" style="left:769.5px;top:97px;letter-spacing:-0.366px;color:#101020">Misc_blockType</div><svg style="left:1039px;top:102px" width="8" height="5" viewBox="0 0 8 5"><path d="M0.5 0.3 L7.5 0.3 L4 4.3 Z" fill="#1c1c28"/></svg><div class="inp" style="left:1059px;top:94px;width:392px;height:20px;"></div><div class="t" style="left:1063.3px;top:97px;letter-spacing:-0.085px;font-weight:bold;-webkit-text-stroke:0.25px;font-size:11.5px;color:#7d7d7d">Dumps Shading:</div><div class="t" style="left:1157px;top:97px;letter-spacing:0.215px;font-weight:bold;-webkit-text-stroke:0.25px;font-size:11.5px;color:#ff4a08">&lt;Dependency Shading&gt;</div><svg style="left:1439px;top:102px" width="8" height="5" viewBox="0 0 8 5"><path d="M0.5 0.3 L7.5 0.3 L4 4.3 Z" fill="#1c1c28"/></svg><div class="a" style="left:658px;top:123px;width:795px;height:38px;background:linear-gradient(#ffffff,#f6f7f9 60%,#eceef2);border:1px solid #c9ccd6;border-top:none;border-radius:0 0 4px 4px;box-shadow:0 1px 0 #d9dbe2"></div><div class="a" style="left:661px;top:125px;width:24px;height:34px;background:linear-gradient(#f4f5f7,#d3d6de 30%,#c8cbd5 55%,#dcdee5 85%,#f0f1f4)"></div><div class="a" style="left:661px;top:127px;width:1px;height:30px;background:linear-gradient(#f4f5f7,#b9bcc8 50%,#f0f1f4)"></div><div class="a" style="left:684px;top:127px;width:1px;height:30px;background:linear-gradient(#f4f5f7,#b9bcc8 50%,#f0f1f4)"></div><div class="a" style="left:689px;top:127px;width:1px;height:31px;background:linear-gradient(#f4f5f8,#c3c6d2 50%,#f4f5f8)"></div><div class="a" style="left:801px;top:127px;width:1px;height:31px;background:linear-gradient(#f4f5f8,#c3c6d2 50%,#f4f5f8)"></div><div class="a" style="left:885px;top:127px;width:1px;height:31px;background:linear-gradient(#f4f5f8,#c3c6d2 50%,#f4f5f8)"></div><div class="a" style="left:944px;top:127px;width:1px;height:31px;background:linear-gradient(#f4f5f8,#c3c6d2 50%,#f4f5f8)"></div><div class="a" style="left:977px;top:127px;width:1px;height:31px;background:linear-gradient(#f4f5f8,#c3c6d2 50%,#f4f5f8)"></div><div class="a" style="left:1010px;top:127px;width:1px;height:31px;background:linear-gradient(#f4f5f8,#c3c6d2 50%,#f4f5f8)"></div><div class="a" style="left:1043px;top:127px;width:1px;height:31px;background:linear-gradient(#f4f5f8,#c3c6d2 50%,#f4f5f8)"></div><div class="a" style="left:1154px;top:127px;width:1px;height:31px;background:linear-gradient(#f4f5f8,#c3c6d2 50%,#f4f5f8)"></div><svg style="left:666px;top:134px" width="15" height="15" viewBox="0 0 15 15"><rect x="0.8" y="0.8" width="13" height="13" fill="none" stroke="#111" stroke-width="1.05" stroke-dasharray="2 1.25"/></svg><svg style="left:698px;top:133px" width="16" height="16" viewBox="0 0 16 16"><path d="M2 2 L7.2 2 L7.2 5.4 L14 5.4 L14 13.4 L2 13.4 Z" fill="none" stroke="#000" stroke-width="1.2"/>
<g fill="#fff" stroke="#2a5be8" stroke-width="0.9"><rect x="0.6" y="0.6" width="2.6" height="2.6"/><rect x="5.8" y="0.6" width="2.6" height="2.6"/><rect x="5.8" y="4.2" width="2.6" height="2.6"/><rect x="12.8" y="4.2" width="2.6" height="2.6"/><rect x="12.8" y="12.2" width="2.6" height="2.6"/><rect x="0.6" y="12.2" width="2.6" height="2.6"/></g></svg><svg style="left:723px;top:132px" width="18" height="18" viewBox="0 0 18 18"><path d="M9.6 9.6 L15 15.2" stroke="#c98e2a" stroke-width="3.2" stroke-linecap="round"/><path d="M10.2 10 L14.8 14.8" stroke="#f6c766" stroke-width="1.4" stroke-linecap="round"/>
<circle cx="6.3" cy="6.3" r="5" fill="#ddeef9" stroke="#8a8f98" stroke-width="1.3"/><path d="M3.2 5.4 Q4 3.2 6.4 3" fill="none" stroke="#fff" stroke-width="1.1"/></svg><svg style="left:751px;top:134px" width="14" height="14" viewBox="0 0 14 14"><path d="M7 0.2 L9.6 3.4 L7.9 3.4 L7.9 6.1 L10.6 6.1 L10.6 4.4 L13.8 7 L10.6 9.6 L10.6 7.9 L7.9 7.9 L7.9 10.6 L9.6 10.6 L7 13.8 L4.4 10.6 L6.1 10.6 L6.1 7.9 L3.4 7.9 L3.4 9.6 L0.2 7 L3.4 4.4 L3.4 6.1 L6.1 6.1 L6.1 3.4 L4.4 3.4 Z" fill="#000"/></svg><svg style="left:770px;top:128px" width="30" height="26" viewBox="0 0 30 26"><g fill="none" stroke="#2f3542" stroke-width="1" stroke-linecap="round"><path d="M15.9 6.8 Q15.5 5 13.4 5 Q10.2 5.4 10.2 12.8 Q10.4 20.4 13.4 20.6 Q15.6 20.4 16.2 17.4"/><path d="M12.2 15.4 Q19 15.4 21.2 13.4 Q22.6 11.6 20.6 10.4"/><path d="M8.8 9.6 Q6 10.4 6.2 12.4 Q6.4 14 8.8 14.6"/>
<path d="M14.3 8.6 L16.7 8.6 M15.5 7.4 L15.5 9.8 M17.3 10.4 L19.7 10.4 M18.5 9.2 L18.5 11.6 M12.3 12.5 L14.7 12.5 M13.5 11.3 L13.5 13.7" stroke-width="1.1"/></g></svg><svg style="left:809px;top:133px" width="16" height="16" viewBox="0 0 16 16"><rect x="0.6" y="0.6" width="14.8" height="14.8" fill="#e6ebf7" stroke="#6d7fb8" stroke-width="1.1"/>
<g fill="#1f2c50"><path d="M2.4 2.4 L6.4 2.4 L5 3.8 L7 5.8 L5.8 7 L3.8 5 L2.4 6.4 Z"/><path d="M13.6 2.4 L13.6 6.4 L12.2 5 L10.2 7 L9 5.8 L11 3.8 L9.6 2.4 Z"/><path d="M2.4 13.6 L2.4 9.6 L3.8 11 L5.8 9 L7 10.2 L5 12.2 L6.4 13.6 Z"/><path d="M13.6 13.6 L9.6 13.6 L11 12.2 L9 10.2 L10.2 9 L12.2 11 L13.6 9.6 Z"/></g></svg><svg style="left:836px;top:134px" width="14" height="14" viewBox="0 0 14 14"><path d="M4.4 0.6 L4.4 13.4 M9.6 0.6 L9.6 13.4 M0.6 4.6 L13.4 4.6 M0.6 9.6 L13.4 9.6" stroke="#000" stroke-width="1.3" fill="none"/></svg><svg style="left:861px;top:135px" width="16" height="10" viewBox="0 0 16 10"><rect x="0.5" y="0.8" width="14.6" height="8.4" rx="0.4" fill="#f5a93a" stroke="#d27f14" stroke-width="1"/><rect x="1.4" y="1.6" width="12.8" height="2.6" fill="#fbc873"/>
<path d="M2.6 8.6 L2.6 5 M4.6 8.6 L4.6 6.4 M6.6 8.6 L6.6 6.4 M8.6 8.6 L8.6 5 M10.6 8.6 L10.6 6.4 M12.6 8.6 L12.6 5" stroke="#fff3d8" stroke-width="0.9"/></svg><svg style="left:894px;top:133px" width="17" height="16" viewBox="0 0 17 16"><path d="M5.8 0.6 L13.8 0.6 L10.2 5.6 L13.2 5.6 L2.6 14.8 L6.4 8.6 L0.8 8.6 Z" fill="#c6c6c6" stroke="#bcbcbc" stroke-width="0.5"/>
<circle cx="12.4" cy="11.8" r="3.5" fill="#a2a2a2" stroke="#fff" stroke-width="0.8"/><path d="M10.5 11.8 L14.3 11.8 " stroke="#fff" stroke-width="1.2"/></svg><svg style="left:920px;top:133px" width="17" height="16" viewBox="0 0 17 16"><path d="M5.8 0.6 L13.8 0.6 L10.2 5.6 L13.2 5.6 L2.6 14.8 L6.4 8.6 L0.8 8.6 Z" fill="#c6c6c6" stroke="#bcbcbc" stroke-width="0.5"/>
<circle cx="12.4" cy="11.8" r="3.5" fill="#a2a2a2" stroke="#fff" stroke-width="0.8"/><path d="M10.5 11.8 L14.3 11.8 M12.4 9.9 L12.4 13.7" stroke="#fff" stroke-width="1.2"/></svg><svg style="left:952px;top:133px" width="16" height="16" viewBox="0 0 16 16"><circle cx="8" cy="8" r="6.5" fill="#fff" stroke="#c23030" stroke-width="2.1"/><circle cx="8" cy="8" r="4.3" fill="#f4f4f6" stroke="#dd7a7a" stroke-width="0.9"/>
<path d="M6 6.6 L9.4 6.6 L9.4 10.2" fill="none" stroke="#2c3458" stroke-width="1.2"/></svg><svg style="left:987px;top:134px" width="14" height="14" viewBox="0 0 14 14"><path d="M2.9 0.5 L7 4.5 L11.1 0.5 L13.5 2.9 L9.5 7 L13.5 11.1 L11.1 13.5 L7 9.5 L2.9 13.5 L0.5 11.1 L4.5 7 L0.5 2.9 Z" fill="#d23838" stroke="#b52626" stroke-width="0.8" stroke-linejoin="round"/></svg><svg style="left:1019px;top:134px" width="15" height="15" viewBox="0 0 15 15"><defs><linearGradient id="grm" x1="0" y1="0" x2="0" y2="1"><stop offset="0" stop-color="#f58b80"/><stop offset="1" stop-color="#d83a32"/></linearGradient></defs>
<circle cx="7.5" cy="7.5" r="6.6" fill="url(#grm)" stroke="#d24a42" stroke-width="0.8"/><rect x="3.6" y="6.4" width="7.8" height="2.4" rx="0.5" fill="#fff"/></svg><div class="a" style="left:1057px;top:137px;width:56px;height:1px;background:linear-gradient(90deg,rgba(190,150,220,0),#c9a6e0 22%,#b9bbc6 40%,#c6c8d2 80%,rgba(200,200,210,0))"></div><svg style="left:1068px;top:130px" width="12" height="18" viewBox="0 0 12 18"><defs><linearGradient id="gsl" x1="0" y1="0" x2="1" y2="0"><stop offset="0" stop-color="#fafbfc"/><stop offset="1" stop-color="#d4d7df"/></linearGradient></defs>
<path d="M1 1.6 Q1 0.6 2 0.6 L9.6 0.6 Q10.6 0.6 10.6 1.6 L10.6 11.6 L5.8 16.8 L1 11.6 Z" fill="url(#gsl)" stroke="#a4a8b6" stroke-width="0.9"/></svg><svg style="left:1132px;top:134px" width="12" height="12" viewBox="0 0 12 12"><path d="M0.8 11 L5.2 0.8 L6.8 0.8 L11.2 11 L9 11 L6 3.6 L3 11 Z" fill="#c40000"/></svg><svg style="left:1163px;top:133px" width="17" height="15" viewBox="0 0 17 15"><path d="M8.4 14.4 L6.6 14.4 L6.6 9.8 Q3 8.6 3 5 L0.8 5 L4.2 0.8 L7.6 5 L5.6 5 Q5.8 7.4 8.4 7.6 Q11 7.4 11.2 5 L9.2 5 L12.6 0.8 L16 5 L13.8 5 Q13.8 8.6 10.2 9.8 L10.2 14.4 Z" fill="#5cb85c" stroke="#3d8f3d" stroke-width="0.8" stroke-linejoin="round"/></svg><svg style="left:1189px;top:133px" width="16" height="16" viewBox="0 0 16 16"><rect x="0.6" y="0.6" width="14.8" height="14.8" fill="#e9edf9" stroke="#7b87c9" stroke-width="1.1"/>
<circle cx="5" cy="4.6" r="1.8" fill="#f0a24a" stroke="#c9731c" stroke-width="0.6"/><circle cx="10.8" cy="6.8" r="1.8" fill="#e06060" stroke="#b43030" stroke-width="0.6"/><circle cx="6.6" cy="11" r="1.8" fill="#6a9be8" stroke="#2f62c0" stroke-width="0.6"/></svg><svg style="left:652px;top:169px;overflow:hidden" width="806" height="428" viewBox="652 169 806 428"><defs><clipPath id="cpt"><path clip-rule="evenodd" d="M1043.0 249.0 L1057.0 252.4 L1084.6 259.8 L1110.7 265.3 L1110.7 268.0 L1087.0 264.0 L1083.0 269.4 L1084.6 280.0 L1087.0 294.0 L1082.0 305.0 L1076.0 309.0 L1069.5 303.7 L1062.7 302.0 L1064.0 310.5 L1060.0 321.5 L1053.0 338.0 L1054.4 354.4 L1055.4 358.2 L1064.0 359.2 L1064.0 370.7 L1063.0 388.0 L1068.8 388.0 L1068.8 369.8 L1091.8 373.6 L1096.6 380.3 L1097.6 395.7 L1095.7 401.4 L1103.3 401.4 L1114.9 384.1 L1124.5 378.4 L1140.7 385.7 L1161.8 397.7 L1189.0 409.8 L1210.0 412.8 L1226.7 422.8 L1213.0 432.4 L1201.0 446.0 L1192.0 462.6 L1196.5 477.7 L1204.0 488.0 L1201.0 500.0 L1196.5 510.0 L1180.0 503.0 L1166.4 480.7 L1161.8 462.6 L1151.3 476.0 L1161.0 480.7 L1159.4 494.0 L1149.8 507.9 L1139.0 511.0 L1124.0 495.8 L1092.4 496.4 L1088.0 503.0 L1095.4 523.0 L1098.5 535.0 L1092.4 538.0 L1088.0 527.5 L1075.8 507.9 L1065.0 495.0 L1052.0 508.4 L1042.7 509.7 L1031.7 522.0 L1023.5 524.8 L1020.7 520.7 L1018.0 526.2 L1009.7 527.6 L1008.4 533.0 L1000.0 540.0 L968.0 530.0 L920.0 510.0 L880.0 500.0 L830.0 478.0 L790.0 450.0 L760.0 410.0 L760.0 340.0 L800.0 290.0 L850.0 270.0 L920.0 258.0 L1000.0 258.0 L1040.0 265.0 Z M1061.5 414.5 L1065.0 411.5 L1070.2 407.8 L1070.2 415.8 L1072.0 430.2 L1075.0 447.5 L1076.2 459.0 L1074.5 462.5 L1073.0 455.2 L1069.8 439.8 L1067.0 426.4 L1063.0 420.6 Z M1089.0 416.8 L1091.8 413.0 L1095.7 412.0 L1096.6 420.6 L1103.3 426.4 L1116.8 431.2 L1145.0 438.5 L1146.0 447.5 L1125.6 438.0 L1113.0 433.0 L1097.6 427.0 L1090.9 422.5 Z M990.5 480.5 L996.0 474.5 L1005.0 472.5 L1003.5 476.0 L996.0 481.0 L992.0 482.5 Z"/></clipPath></defs><path fill-rule="evenodd" fill="#b2975f" d="M1043.0 249.0 L1057.0 252.4 L1084.6 259.8 L1110.7 265.3 L1110.7 268.0 L1087.0 264.0 L1083.0 269.4 L1084.6 280.0 L1087.0 294.0 L1082.0 305.0 L1076.0 309.0 L1069.5 303.7 L1062.7 302.0 L1064.0 310.5 L1060.0 321.5 L1053.0 338.0 L1054.4 354.4 L1055.4 358.2 L1064.0 359.2 L1064.0 370.7 L1063.0 388.0 L1068.8 388.0 L1068.8 369.8 L1091.8 373.6 L1096.6 380.3 L1097.6 395.7 L1095.7 401.4 L1103.3 401.4 L1114.9 384.1 L1124.5 378.4 L1140.7 385.7 L1161.8 397.7 L1189.0 409.8 L1210.0 412.8 L1226.7 422.8 L1213.0 432.4 L1201.0 446.0 L1192.0 462.6 L1196.5 477.7 L1204.0 488.0 L1201.0 500.0 L1196.5 510.0 L1180.0 503.0 L1166.4 480.7 L1161.8 462.6 L1151.3 476.0 L1161.0 480.7 L1159.4 494.0 L1149.8 507.9 L1139.0 511.0 L1124.0 495.8 L1092.4 496.4 L1088.0 503.0 L1095.4 523.0 L1098.5 535.0 L1092.4 538.0 L1088.0 527.5 L1075.8 507.9 L1065.0 495.0 L1052.0 508.4 L1042.7 509.7 L1031.7 522.0 L1023.5 524.8 L1020.7 520.7 L1018.0 526.2 L1009.7 527.6 L1008.4 533.0 L1000.0 540.0 L968.0 530.0 L920.0 510.0 L880.0 500.0 L830.0 478.0 L790.0 450.0 L760.0 410.0 L760.0 340.0 L800.0 290.0 L850.0 270.0 L920.0 258.0 L1000.0 258.0 L1040.0 265.0 Z M1061.5 414.5 L1065.0 411.5 L1070.2 407.8 L1070.2 415.8 L1072.0 430.2 L1075.0 447.5 L1076.2 459.0 L1074.5 462.5 L1073.0 455.2 L1069.8 439.8 L1067.0 426.4 L1063.0 420.6 Z M1089.0 416.8 L1091.8 413.0 L1095.7 412.0 L1096.6 420.6 L1103.3 426.4 L1116.8 431.2 L1145.0 438.5 L1146.0 447.5 L1125.6 438.0 L1113.0 433.0 L1097.6 427.0 L1090.9 422.5 Z M990.5 480.5 L996.0 474.5 L1005.0 472.5 L1003.5 476.0 L996.0 481.0 L992.0 482.5 Z"/><path fill="#b2975f" d="M1076.0 528.0 L1078.5 525.0 L1082.0 524.8 L1084.2 528.5 L1081.5 532.0 L1078.0 532.2 Z"/><g clip-path="url(#cpt)"><path d="M1038.8 262 L1040 281 L1028.5 322 L1024.4 363.5 L1028.5 404.6 L1034.7 433.4 L1050 445 L1075 440 L1072 380 L1068 300 L1095 262 Z" fill="#a48a53" opacity=".42"/><path d="M1040 281 L1028.5 322 L1024.4 363.5 L1028.5 404.6 L1034.7 433.4" fill="none" stroke="#c8b07a" stroke-width="1.4" opacity=".3"/><path d="M964.7 484 L970.9 464.3 L989.4 447.8 L1022.3 441.6 L1051 445.8 L1063.5 462.2 L1068 480 L1060 482 L1055 466 L1046 453 L1022 449 L992 455 L977 468 L971 486 Z" fill="#98804c" opacity=".55"/><path d="M1018 449 L1040 452 L1056 462 L1062 474" fill="none" stroke="#e6d49a" stroke-width="1" opacity=".6"/><path d="M1064 440 L1075 470 L1085 490 L1078 492 L1066 470 Z" fill="#9c8350" opacity=".4"/><g fill="none" stroke="#5e4f2d" stroke-width="1" opacity=".68" shape-rendering="crispEdges"><polyline points="799.6,279.0 818.8,302.3 831.0,351.7 847.6,420.0 857.0,453.5 862.7,474.0"/><polyline points="875.0,281.7 888.7,340.7 909.3,420.0 914.8,441.0 927.4,493.8"/><polyline points="932.3,273.5 946.0,328.4 958.4,379.0 968.0,420.0 972.7,431.5 986.4,489.0 993.0,515.0"/><polyline points="994.0,274.9 1003.7,317.4 1016.0,368.0 1029.7,420.0 1042.7,478.0 1051.0,508.0"/><polyline points="1047.6,257.0 1054.4,283.0 1064.0,310.5"/><polyline points="1075.8,370.6 1087.4,420.0 1092.4,429.4 1107.5,494.3"/><polyline points="1142.0,385.7 1152.8,426.4 1161.0,462.6"/><polyline points="1210.0,412.8 1213.0,431.0"/><polyline points="776.2,361.3 831.0,351.7 888.7,339.3 920.0,332.5 946.0,327.8 1003.7,317.4 1036.6,311.0 1062.0,310.0"/><polyline points="788.6,412.0 843.5,402.4 901.0,390.0 920.0,386.0 958.4,379.0 1016.0,368.0 1062.7,362.7"/><polyline points="857.0,453.5 914.8,441.0 972.7,431.5 1026.0,420.6 1064.6,416.5 1095.0,412.0 1120.0,406.6 1161.8,397.7"/><polyline points="927.4,493.8 986.4,489.0 1042.7,478.0 1065.0,471.7 1101.5,464.0 1158.8,452.0 1201.0,446.0"/><polyline points="1180.0,503.3 1201.0,497.3"/><path d="M919 366 L928 364.5 M926.5 376 L929 386.5 M1003 296 L1004 300"/></g></g><path fill-rule="evenodd" fill="#371a6b" d="M1043.0 248.0 L1040.0 279.0 L1002.0 273.5 L975.0 269.4 L920.0 273.5 L895.6 276.2 L857.2 285.8 L814.7 302.3 L776.2 346.2 L777.0 400.0 L779.0 404.0 L802.0 430.0 L829.7 457.6 L862.7 475.4 L895.6 487.0 L920.0 493.5 L954.9 508.4 L982.3 520.7 L1008.4 533.0 L1015.0 540.0 L1027.6 545.4 L1031.7 556.4 L1033.0 570.0 L1042.7 574.0 L1050.9 579.7 L1053.6 585.0 L1056.0 591.0 L1037.0 583.8 L1015.0 572.8 L996.0 561.9 L968.6 545.4 L941.0 531.7 L927.4 526.7 L900.0 520.7 L879.0 515.0 L829.7 496.0 L784.5 467.2 L742.5 413.7 L742.0 400.0 L741.0 336.6 L791.3 277.6 L840.7 255.7 L890.0 244.7 L920.0 241.5 L936.5 240.6 L975.0 242.0 L1016.0 245.0 Z M999.0 546.0 L1001.0 540.5 L1004.5 538.3 L1006.0 541.0 L1005.5 549.0 L1003.5 553.0 L1000.0 552.5 L998.8 549.0 Z"/><path d="M911 496 L922 492 L936 500 L925 526 L912 522 Z" fill="#2b1258" opacity=".7"/><g stroke="#1e0d45" stroke-width="0.7" fill="none"><path d="M791.3 277.6 L815 302"/><path d="M742 382 L776 380.5"/><path d="M920 243 L922 273"/><path d="M829.7 457.6 L810.5 482.3"/><path d="M1015 540 L1005 566"/></g><path d="M1040 584.5 L1053 585 L1066 585.5 L1100 586 L1107 587 L1107 592 L1058 592.5 Z" fill="#a58fce"/><path d="M1085.2 568.8 L1091.3 572.3 L1095.8 569.3 L1100.3 570.3 L1102.9 577.3 L1100.8 580.4 L1103.9 586.4 L1101.9 589.6 L1091.8 586.6 L1089.3 578.3 Z" fill="#b2975f"/><path d="M1024 546.5 L1028.5 545 L1030.5 548.8 L1026 548 Z" fill="#b2975f"/><path d="M1091.3 586 L1095.2 578 L1096 586.4 Z" fill="#f7bcd4"/><path d="M860.0 270.0 L854.5 309.1" stroke="#f7bcd4" stroke-width="1.7"/><path d="M853.0 320.0 L851.9 308.7 L857.2 309.5 Z" fill="#f7bcd4" stroke="#e89cbc" stroke-width="0.4"/><path d="M860.0 270.0 L900.5 300.6" stroke="#f7bcd4" stroke-width="1.7"/><path d="M909.3 307.2 L898.9 302.7 L902.1 298.4 Z" fill="#f7bcd4" stroke="#e89cbc" stroke-width="0.4"/><path d="M982.5 261.0 L973.4 289.5" stroke="#f7bcd4" stroke-width="1.7"/><path d="M970.0 300.0 L970.8 288.7 L975.9 290.3 Z" fill="#f7bcd4" stroke="#e89cbc" stroke-width="0.4"/><path d="M982.5 261.0 L1019.7 289.6" stroke="#f7bcd4" stroke-width="1.7"/><path d="M1028.4 296.3 L1018.0 291.7 L1021.3 287.5 Z" fill="#f7bcd4" stroke="#e89cbc" stroke-width="0.4"/><path d="M773.5 327.5 L789.6 337.3" stroke="#f7bcd4" stroke-width="1.7"/><path d="M799.0 343.0 L788.2 339.6 L791.0 335.0 Z" fill="#f7bcd4" stroke="#e89cbc" stroke-width="0.4"/><path d="M773.5 327.5 L800.3 376.4" stroke="#f7bcd4" stroke-width="1.7"/><path d="M805.6 386.0 L797.9 377.7 L802.7 375.1 Z" fill="#f7bcd4" stroke="#e89cbc" stroke-width="0.4"/><path d="M786.7 442.5 L802.3 398.4" stroke="#f7bcd4" stroke-width="1.7"/><path d="M806.0 388.0 L804.9 399.3 L799.8 397.5 Z" fill="#f7bcd4" stroke="#e89cbc" stroke-width="0.4"/><path d="M786.7 442.5 L809.3 437.4" stroke="#f7bcd4" stroke-width="1.7"/><path d="M820.0 435.0 L809.9 440.1 L808.7 434.8 Z" fill="#f7bcd4" stroke="#e89cbc" stroke-width="0.4"/><path d="M872.8 498.0 L828.1 444.4" stroke="#f7bcd4" stroke-width="1.7"/><path d="M821.0 436.0 L830.1 442.7 L826.0 446.2 Z" fill="#f7bcd4" stroke="#e89cbc" stroke-width="0.4"/><path d="M872.8 498.0 L884.1 480.3" stroke="#f7bcd4" stroke-width="1.7"/><path d="M890.0 471.0 L886.4 481.7 L881.8 478.8 Z" fill="#f7bcd4" stroke="#e89cbc" stroke-width="0.4"/><path d="M977.6 535.8 L964.4 512.6" stroke="#f7bcd4" stroke-width="1.7"/><path d="M959.0 503.0 L966.8 511.2 L962.1 513.9 Z" fill="#f7bcd4" stroke="#e89cbc" stroke-width="0.4"/><path d="M977.6 535.8 L1010.2 511.4" stroke="#f7bcd4" stroke-width="1.7"/><path d="M1019.0 504.8 L1011.8 513.6 L1008.6 509.2 Z" fill="#f7bcd4" stroke="#e89cbc" stroke-width="0.4"/><rect x="876.5" y="558" width="59.2" height="5" fill="#fff" fill-opacity=".74"/><rect x="876.5" y="563" width="59.2" height="5" fill="#434343" fill-opacity=".77"/><rect x="935.7" y="563" width="59.2" height="5" fill="#fff" fill-opacity=".74"/><rect x="935.7" y="558" width="59.2" height="5" fill="#434343" fill-opacity=".77"/><rect x="994.8" y="558" width="59.2" height="5" fill="#fff" fill-opacity=".74"/><rect x="994.8" y="563" width="59.2" height="5" fill="#434343" fill-opacity=".77"/><rect x="1054.0" y="563" width="59.2" height="5" fill="#fff" fill-opacity=".74"/><rect x="1054.0" y="558" width="59.2" height="5" fill="#434343" fill-opacity=".77"/><rect x="1113.2" y="558" width="59.2" height="5" fill="#fff" fill-opacity=".74"/><rect x="1113.2" y="563" width="59.2" height="5" fill="#434343" fill-opacity=".77"/><rect x="1172.3" y="563" width="59.2" height="5" fill="#fff" fill-opacity=".74"/><rect x="1172.3" y="558" width="59.2" height="5" fill="#434343" fill-opacity=".77"/><path d="M876.5 557.5 L1231.5 557.5 M876.5 568.5 L1231.5 568.5 M1231.5 557 L1231.5 569" stroke="#000" stroke-width="1" fill="none"/><text x="876.5" y="555.5" text-anchor="middle" font-family="DejaVu Sans, sans-serif" font-size="10.3" fill="#000">0</text><text x="935.7" y="555.5" text-anchor="middle" font-family="DejaVu Sans, sans-serif" font-size="10.3" fill="#000">50</text><text x="994.8" y="555.5" text-anchor="middle" font-family="DejaVu Sans, sans-serif" font-size="10.3" fill="#000">100</text><text x="1054.0" y="555.5" text-anchor="middle" font-family="DejaVu Sans, sans-serif" font-size="10.3" fill="#000">150</text><text x="1113.2" y="555.5" text-anchor="middle" font-family="DejaVu Sans, sans-serif" font-size="10.3" fill="#000">200</text><text x="1172.3" y="555.5" text-anchor="middle" font-family="DejaVu Sans, sans-serif" font-size="10.3" fill="#000">250</text><text x="1231.5" y="555.5" text-anchor="middle" font-family="DejaVu Sans, sans-serif" font-size="10.3" fill="#000">300</text><text x="656" y="591.4" font-family="DejaVu Sans, sans-serif" font-weight="bold" font-size="7.4" fill="#4c4c4c" textLength="87" lengthAdjust="spacingAndGlyphs">101 fps | 9.900 ms/f</text><text x="1014" y="591.4" font-family="DejaVu Sans, sans-serif" font-weight="bold" font-size="7.4" fill="#4c4c4c" textLength="442" lengthAdjust="spacingAndGlyphs">NVIDIA Corporation NVIDIA GeForce RTX 3080 Laptop GPU/PCIe/SSE2 | OpenGL v4.6.0 NVIDIA 512.36</text><path d="M1141.7 177.8 L1368.3 177.8 L1368.3 232.3 L1241 232.3 L1119 273.5 L1184.5 232.3 L1141.7 232.3 Z" fill="#fff" stroke="#e8151b" stroke-width="3" stroke-linejoin="miter"/><text x="1255" y="200.8" text-anchor="middle" font-family="Liberation Sans, sans-serif" font-weight="bold" font-size="13.33" fill="#000">No Starting point for defining the</text><text x="1255" y="216" text-anchor="middle" font-family="Liberation Sans, sans-serif" font-weight="bold" font-size="13.33" fill="#000">On bench dependencies</text><defs><radialGradient id="gsun"><stop offset="0" stop-color="#ffc400"/><stop offset="0.7" stop-color="#ffd61a"/><stop offset="1" stop-color="#ffe23a"/></radialGradient></defs><path d="M1459.5 179.9 L1472.1 183.9 L1459.0 182.6 Z M1458.6 183.4 L1464.6 189.0 L1457.1 185.6 Z M1456.5 186.2 L1462.7 197.8 L1454.3 187.7 Z M1453.5 188.0 L1453.8 196.2 L1450.9 188.5 Z M1450.1 188.5 L1446.1 201.1 L1447.4 188.0 Z M1446.6 187.6 L1441.0 193.6 L1444.4 186.1 Z M1443.8 185.5 L1432.2 191.7 L1442.3 183.3 Z M1442.0 182.5 L1433.8 182.8 L1441.5 179.9 Z M1441.5 179.1 L1428.9 175.1 L1442.0 176.4 Z M1442.4 175.6 L1436.4 170.0 L1443.9 173.4 Z M1444.5 172.8 L1438.3 161.2 L1446.7 171.3 Z M1447.5 171.0 L1447.2 162.8 L1450.1 170.5 Z M1450.9 170.5 L1454.9 157.9 L1453.6 171.0 Z M1454.4 171.4 L1460.0 165.4 L1456.6 172.9 Z M1457.2 173.5 L1468.8 167.3 L1458.7 175.7 Z M1459.0 176.5 L1467.2 176.2 L1459.5 179.1 Z" fill="#ffe042"/><circle cx="1450.5" cy="179.5" r="10" fill="url(#gsun)"/><defs><linearGradient id="gdk" x1="0" y1="0" x2="1" y2="1"><stop offset="0" stop-color="#1c1c1c"/><stop offset="1" stop-color="#5a5a5a"/></linearGradient></defs><path d="M1392.2 193.1 L1401.2 188.3 L1406.6 189.7 L1405.3 197.9 L1400.5 202.7 Z" fill="#8fd822"/><path d="M1401.2 188.3 L1406.6 189.7 L1405.3 197.9 Z" fill="#6fb414"/><path d="M1393.6 208.9 L1414.9 204.8 L1420.4 222.6 L1399.1 228.1 Z" fill="#c9c9c9"/><path d="M1399.1 228.1 L1420.4 222.6 L1420.4 232.2 L1401.2 237.7 Z" fill="#8b8b8b"/><path d="M1393.6 208.9 L1399.1 228.1 L1401.2 237.7 L1395 219 Z" fill="#b4b4b4"/><path d="M1408 236.3 L1414.2 235.6 L1421.7 248.7 L1412.1 253.5 L1407.3 250.7 Z" fill="#4a4a4a"/><ellipse cx="1414.5" cy="250.3" rx="7.2" ry="3" transform="rotate(-22 1414.5 250.3)" fill="#3a3a3a"/><path d="M1372.3 220.6 L1391.6 224.3 L1375.1 234.3 Z" fill="url(#gdk)"/><path d="M1422.4 217.5 L1438.9 207.5 L1441.9 221.2 Z" fill="#e84c00"/><path d="M1438.9 207.5 L1441.9 221.2 L1436 219 Z" fill="#f06a1a"/><circle cx="1407" cy="205.5" r="7.5" fill="#2f4c8d"/><path d="M1403 212 L1407 214 L1411 212 Z" fill="#4a8ae0"/><text x="1407" y="209" text-anchor="middle" font-family="Liberation Sans, sans-serif" font-size="10.5" fill="#e8b58a">Z</text><text x="1397.7" y="189.5" text-anchor="middle" font-family="DejaVu Sans, sans-serif" font-weight="bold" font-size="10" fill="#000">Y</text><text x="1446" y="217" text-anchor="middle" font-family="DejaVu Sans, sans-serif" font-weight="bold" font-size="10" fill="#000">X</text></svg><div class="a" style="left:653px;top:597px;width:804px;height:28px;border:1px solid #b9bdc9;border-radius:3px;background:#eceef2"></div><div class="t" style="left:659px;top:604px;letter-spacing:0.119px;color:#1f2038">(2037.5, 1420.8, 775.0)</div><div class="btn" style="left:1342px;top:600px;width:34px;height:22px;"></div><div class="btn" style="left:1380px;top:600px;width:74px;height:22px;"></div><svg style="left:1346px;top:603px" width="18" height="16" viewBox="0 0 18 16"><defs><radialGradient id="ggl" cx="0.35" cy="0.3" r="0.8"><stop offset="0" stop-color="#bfe6ff"/><stop offset="1" stop-color="#2f86d6"/></radialGradient></defs>
<circle cx="6.6" cy="6.6" r="6.2" fill="url(#ggl)" stroke="#3a78b8" stroke-width="0.6"/>
<path d="M2.2 4.4 Q4 1.4 6.8 1.6 Q8.4 3 6.4 4.4 Q5.4 6 3.8 6.4 Q2.4 6 2.2 4.4 Z M8.6 5.4 Q10.8 4.6 12 6.4 Q11.6 9 9.8 9.6 Q8 8 8.6 5.4 Z M4.2 8.2 Q6 8 6.6 10 Q6 12 4.6 11.6 Z" fill="#6cc04a"/>
<ellipse cx="11" cy="12" rx="5.4" ry="3" fill="#fff" stroke="#2a3aa0" stroke-width="1.1"/><circle cx="11" cy="12" r="1.9" fill="#2a3aa0"/><circle cx="11" cy="12" r="0.8" fill="#111"/></svg><svg style="left:1364px;top:609px" width="8" height="5" viewBox="0 0 8 5"><path d="M0.5 0.5 L7.5 0.5 L4 4.5 Z" fill="#80859a"/></svg><svg style="left:1384px;top:603px" width="16" height="16" viewBox="0 0 16 16"><rect x="0.5" y="0.5" width="15" height="15" fill="#6fc48c" stroke="#7aa86a" stroke-width="0.8"/><rect x="1" y="1" width="14" height="4.8" fill="#6fc48c"/><rect x="1" y="5.8" width="14" height="4.6" fill="#b3da8c"/><rect x="1" y="10.4" width="14" height="4.6" fill="#fde68e"/><rect x="0.5" y="0.5" width="15" height="15" fill="none" stroke="#c9b060" stroke-width="0.7" opacity=".6"/></svg><div class="t" style="left:1403px;top:604px;letter-spacing:-0.292px;color:#1f2038">Legend</div><svg style="left:1442px;top:609px" width="8" height="5" viewBox="0 0 8 5"><path d="M0.5 0.5 L7.5 0.5 L4 4.5 Z" fill="#80859a"/></svg><svg style="left:739px;top:636px" width="11" height="3" viewBox="0 0 11 3"><g fill="#9a9eac"><rect x="0" y="0" width="1" height="1"/><rect x="2" y="0" width="1" height="1"/><rect x="4" y="0" width="1" height="1"/><rect x="6" y="0" width="1" height="1"/><rect x="8" y="0" width="1" height="1"/></g></svg><svg style="left:256px;top:326px" width="3" height="11" viewBox="0 0 3 11"><g fill="#9a9eac"><rect x="0" y="0" width="1" height="1"/><rect x="0" y="2" width="1" height="1"/><rect x="0" y="4" width="1" height="1"/><rect x="0" y="6" width="1" height="1"/><rect x="0" y="8" width="1" height="1"/></g></svg><svg style="left:626px;top:324px" width="3" height="11" viewBox="0 0 3 11"><g fill="#9a9eac"><rect x="0" y="0" width="1" height="1"/><rect x="0" y="2" width="1" height="1"/><rect x="0" y="4" width="1" height="1"/><rect x="0" y="6" width="1" height="1"/><rect x="0" y="8" width="1" height="1"/></g></svg><div class="a" style="left:5px;top:643px;width:1480px;height:82px;border:1px solid #a9aebb;background:#fff"></div><div class="a" style="left:6px;top:644px;width:1478px;height:19px;background:linear-gradient(#f7f8fa,#eff0f3)"></div><div class="a" style="left:6px;top:663px;width:1478px;height:1px;background:#d0d3db"></div><div class="a" style="left:6px;top:664px;width:1478px;height:20px;background:#f0f1f4"></div><div class="a" style="left:6px;top:684px;width:1478px;height:1px;background:#d0d3db"></div><div class="a" style="left:6px;top:705px;width:1478px;height:1px;background:#d0d3db"></div><div class="a" style="left:21px;top:644px;width:1px;height:62px;background:#d0d3db"></div><div class="a" style="left:243px;top:644px;width:1px;height:62px;background:#d0d3db"></div><div class="t" style="left:25px;top:646px;letter-spacing:-0.267px;">Setup Task</div><div class="t" style="left:247.6px;top:646px;letter-spacing:-0.470px;">Message</div><svg style="left:11px;top:670px" width="5" height="8" viewBox="0 0 5 8"><path d="M0.5 0.3 L4.5 4 L0.5 7.7 Z" fill="#1c1c28"/></svg><div class="t" style="left:25px;top:667px;letter-spacing:-0.367px;">On Bench</div><div class="t" style="left:25px;top:688px;letter-spacing:-0.367px;">On Bench</div><div class="t" style="left:247.6px;top:667px;letter-spacing:-0.062px;">The bench (OpenPit/Mine/Pit1/Stage1/800) is set to use the Blasts rule, but no ramp blocks or starting points were found.</div><div class="t" style="left:247.6px;top:688px;letter-spacing:-0.062px;">The bench (OpenPit/Mine/Pit1/Stage1/790) is set to use the Blasts rule, but no ramp blocks or starting points were found.</div><div class="a" style="left:241.2px;top:682.5px;width:1244.8px;height:26px;border:3px solid #e01a1a;border-radius:5px"></div><svg style="left:262px;top:570px" width="12" height="20" viewBox="0 0 12 20"><path d="M0.7 0.7 L0.7 15.6 L4.2 12.3 L6.8 18.4 L9 17.4 L6.4 11.5 L11 11.3 Z" fill="#fff" stroke="#111" stroke-width="1"/></svg>
</body></html>
